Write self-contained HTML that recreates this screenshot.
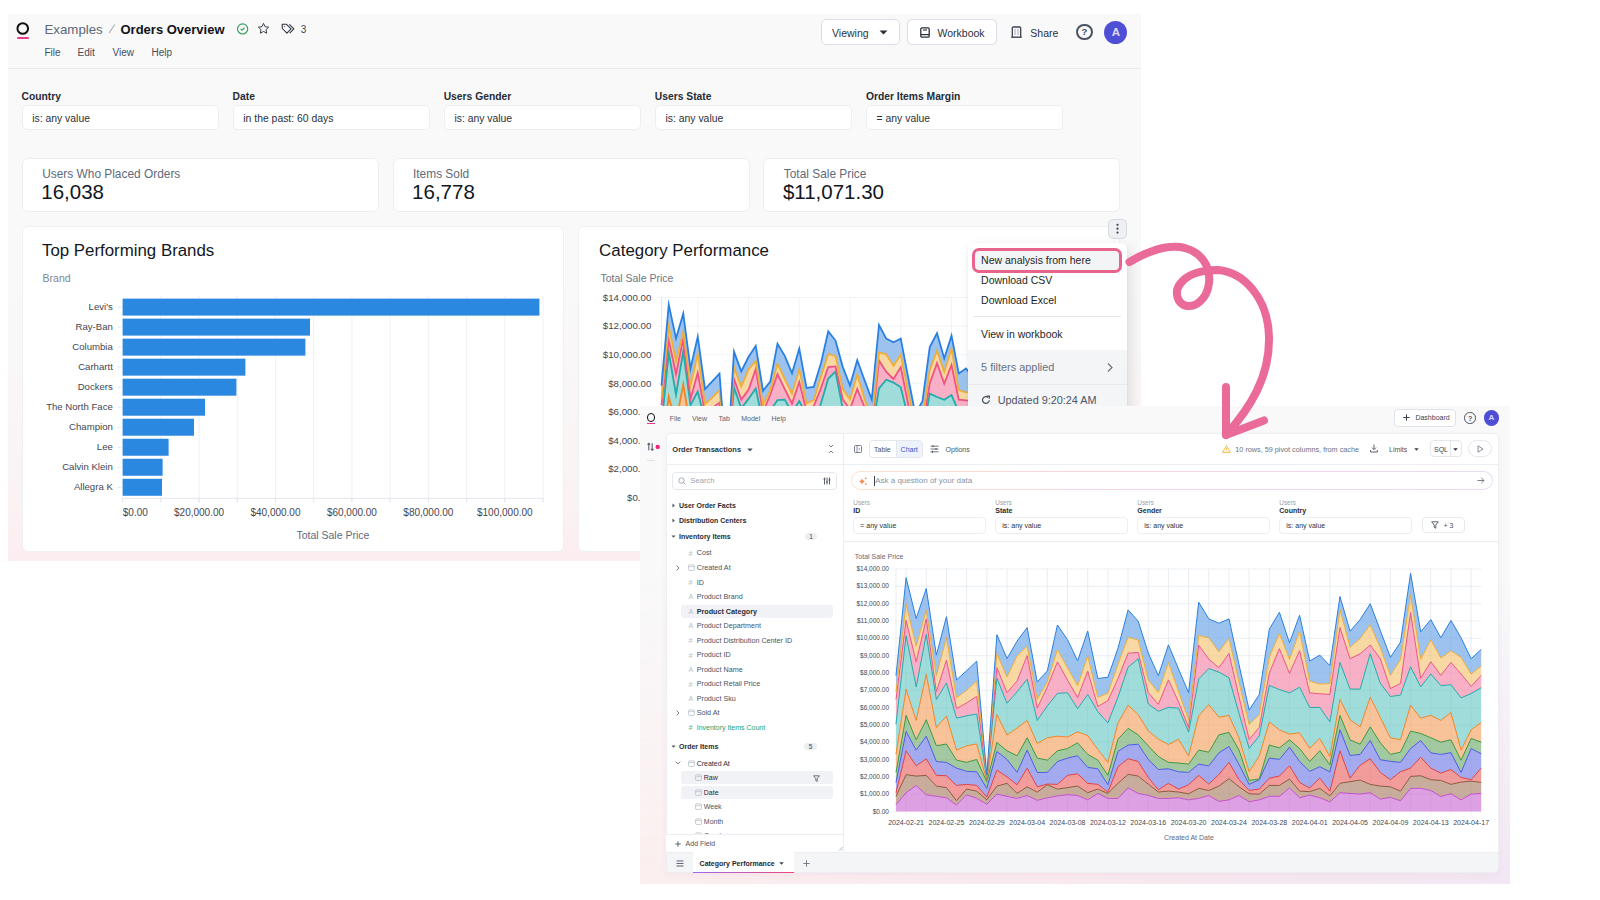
<!DOCTYPE html>
<html><head><meta charset="utf-8"><title>Orders Overview</title>
<style>
*{box-sizing:border-box;margin:0;padding:0}
html,body{width:1600px;height:900px;overflow:hidden;background:#fff;font-family:"Liberation Sans",sans-serif}
.t{position:absolute;white-space:nowrap;line-height:1}
.b{position:absolute}
svg{position:absolute}
</style></head><body>
<div class="b" style="left:8px;top:14px;width:1133px;height:547px;background:linear-gradient(180deg,#f9f9fa 0%,#f9f9fa 50%,#fbf3f3 88%,#fcedf0 100%)"></div>
<div class="b" style="left:8px;top:68px;width:1133px;height:1px;background:#e9ebee"></div>
<svg style="left:15px;top:21px" width="16" height="16" viewBox="0 0 16 16"><circle cx="7.75" cy="7.45" r="5.3" fill="none" stroke="#111" stroke-width="2"/></svg>
<div class="b" style="left:16.6px;top:37px;width:12.4px;height:1.8px;background:#f0398a;border-radius:1px"></div>
<div class="t" style="left:44.40px;top:22.94px;font-size:13.3px;color:#5d6878;font-weight:400;">Examples</div>
<svg style="left:107px;top:23px" width="10" height="12" viewBox="0 0 10 12"><path d="M2.3 9.6L7.6 1.8" stroke="#a9b0bb" stroke-width="1.1" stroke-linecap="round"/></svg>
<div class="t" style="left:120.50px;top:23.20px;font-size:13px;color:#111318;font-weight:700;">Orders Overview</div>
<svg style="left:236px;top:21.5px" width="13" height="13" viewBox="0 0 13 13"><circle cx="6.6" cy="6.9" r="5.1" fill="none" stroke="#2f9e5e" stroke-width="1.15"/><path d="M4.9 7.3 L6.1 8.2 L8.3 6" fill="none" stroke="#2f9e5e" stroke-width="1.1" stroke-linecap="round" stroke-linejoin="round"/></svg>
<svg style="left:256.5px;top:21.8px" width="13" height="13" viewBox="0 0 24 24"><path d="M12 2.5l2.9 6.2 6.6.8-4.9 4.6 1.3 6.6L12 17.4l-5.9 3.3 1.3-6.6-4.9-4.6 6.6-.8z" fill="none" stroke="#2b313b" stroke-width="1.7" stroke-linejoin="round"/></svg>
<svg style="left:280px;top:23px" width="16" height="12" viewBox="0 0 16 12"><path d="M2.2 1.3h4.3l4.6 4.6-4.2 4.2-4.6-4.6z" fill="none" stroke="#2b313b" stroke-width="1.05" stroke-linejoin="round"/><circle cx="4.3" cy="3.4" r="0.5" fill="#2b313b"/><path d="M9.3 1.3l4.6 4.6-4.2 4.2" fill="none" stroke="#2b313b" stroke-width="1.05" stroke-linejoin="round"/></svg>
<div class="t" style="left:300.80px;top:24.54px;font-size:10px;color:#3b4351;font-weight:400;">3</div>
<div class="t" style="left:44.40px;top:47.53px;font-size:10px;color:#454d5a;font-weight:400;">File</div>
<div class="t" style="left:77.60px;top:47.53px;font-size:10px;color:#454d5a;font-weight:400;">Edit</div>
<div class="t" style="left:112.60px;top:47.53px;font-size:10px;color:#454d5a;font-weight:400;">View</div>
<div class="t" style="left:151.50px;top:47.53px;font-size:10px;color:#454d5a;font-weight:400;">Help</div>
<div class="b" style="left:821.2px;top:18.7px;width:78.4px;height:26.3px;border:1px solid #d9dde5;border-radius:5px;background:#fff"></div>
<div class="t" style="left:832.00px;top:28.11px;font-size:10.5px;color:#2b313b;font-weight:400;">Viewing</div>
<svg style="left:878.5px;top:29.5px" width="9" height="5" viewBox="0 0 9 5"><path d="M0.5 0.5h8L4.5 4.5z" fill="#2b313b"/></svg>
<div class="b" style="left:906.9px;top:18.7px;width:89.7px;height:26.3px;border:1px solid #d9dde5;border-radius:5px;background:#fff"></div>
<svg style="left:919.5px;top:26.5px" width="10" height="11" viewBox="0 0 10 11"><rect x="0.8" y="0.8" width="8.4" height="9.4" rx="1.2" fill="none" stroke="#2b313b" stroke-width="1.3"/><path d="M0.8 7.6h8.4" stroke="#2b313b" stroke-width="1.2"/><path d="M3 3h4" stroke="#2b313b" stroke-width="1.1"/></svg>
<div class="t" style="left:937.50px;top:28.11px;font-size:10.5px;color:#2b313b;font-weight:400;">Workbook</div>
<svg style="left:1011px;top:26px" width="11" height="12" viewBox="0 0 11 12"><path d="M1.3 11V2.2Q1.3 1 2.5 1h6q1.2 0 1.2 1.2V11" fill="none" stroke="#3b4351" stroke-width="1.3"/><path d="M0.3 11.2h10.4" stroke="#3b4351" stroke-width="1.4"/><path d="M4 3v6M7 3v6" stroke="#9aa1ac" stroke-width="0.9"/></svg>
<div class="t" style="left:1030.30px;top:27.81px;font-size:10.5px;color:#2b313b;font-weight:400;">Share</div>
<div class="b" style="left:1076.3px;top:23.8px;width:16.4px;height:16.4px;border:2px solid #4a5262;border-radius:50%"></div>
<div class="t" style="left:884.50px;width:400px;text-align:center;top:27.46px;font-size:9.5px;color:#434b5c;font-weight:700;">?</div>
<div class="b" style="left:1104.4px;top:20.5px;width:23px;height:23px;border-radius:50%;background:#4f4fd6"></div>
<div class="t" style="left:915.90px;width:400px;text-align:center;top:26.57px;font-size:11.5px;color:#dedafa;font-weight:700;">A</div>
<div class="t" style="left:21.50px;top:92.08px;font-size:10.3px;color:#262c36;font-weight:700;">Country</div>
<div class="b" style="left:21.50px;top:104.6px;width:197px;height:25.6px;background:#fff;border:1px solid #eceef2;border-radius:5px"></div>
<div class="t" style="left:32.20px;top:113.50px;font-size:10.4px;color:#2b313b;font-weight:400;">is: any value</div>
<div class="t" style="left:232.60px;top:92.08px;font-size:10.3px;color:#262c36;font-weight:700;">Date</div>
<div class="b" style="left:232.60px;top:104.6px;width:197px;height:25.6px;background:#fff;border:1px solid #eceef2;border-radius:5px"></div>
<div class="t" style="left:243.30px;top:113.50px;font-size:10.4px;color:#2b313b;font-weight:400;">in the past: 60 days</div>
<div class="t" style="left:443.70px;top:92.08px;font-size:10.3px;color:#262c36;font-weight:700;">Users Gender</div>
<div class="b" style="left:443.70px;top:104.6px;width:197px;height:25.6px;background:#fff;border:1px solid #eceef2;border-radius:5px"></div>
<div class="t" style="left:454.40px;top:113.50px;font-size:10.4px;color:#2b313b;font-weight:400;">is: any value</div>
<div class="t" style="left:654.80px;top:92.08px;font-size:10.3px;color:#262c36;font-weight:700;">Users State</div>
<div class="b" style="left:654.80px;top:104.6px;width:197px;height:25.6px;background:#fff;border:1px solid #eceef2;border-radius:5px"></div>
<div class="t" style="left:665.50px;top:113.50px;font-size:10.4px;color:#2b313b;font-weight:400;">is: any value</div>
<div class="t" style="left:865.90px;top:92.08px;font-size:10.3px;color:#262c36;font-weight:700;">Order Items Margin</div>
<div class="b" style="left:865.90px;top:104.6px;width:197px;height:25.6px;background:#fff;border:1px solid #eceef2;border-radius:5px"></div>
<div class="t" style="left:876.60px;top:113.50px;font-size:10.4px;color:#2b313b;font-weight:400;">= any value</div>
<div class="b" style="left:21.70px;top:157.6px;width:357px;height:54.5px;background:#fff;border:1px solid #eceef2;border-radius:6px"></div>
<div class="t" style="left:42.20px;top:168.53px;font-size:11.9px;color:#5f6a7b;font-weight:400;">Users Who Placed Orders</div>
<div class="t" style="left:41.30px;top:182.45px;font-size:20.5px;color:#121722;font-weight:400;">16,038</div>
<div class="b" style="left:392.50px;top:157.6px;width:357px;height:54.5px;background:#fff;border:1px solid #eceef2;border-radius:6px"></div>
<div class="t" style="left:413.00px;top:168.53px;font-size:11.9px;color:#5f6a7b;font-weight:400;">Items Sold</div>
<div class="t" style="left:412.10px;top:182.45px;font-size:20.5px;color:#121722;font-weight:400;">16,778</div>
<div class="b" style="left:763.30px;top:157.6px;width:357px;height:54.5px;background:#fff;border:1px solid #eceef2;border-radius:6px"></div>
<div class="t" style="left:783.80px;top:168.53px;font-size:11.9px;color:#5f6a7b;font-weight:400;">Total Sale Price</div>
<div class="t" style="left:782.90px;top:182.45px;font-size:20.5px;color:#121722;font-weight:400;">$11,071.30</div>
<div class="b" style="left:21.5px;top:225.7px;width:542.2px;height:326.8px;background:#fff;border:1px solid #eef0f3;border-radius:6px"></div>
<div class="b" style="left:578.2px;top:225.7px;width:542px;height:326.8px;background:#fff;border:1px solid #eef0f3;border-radius:6px"></div>
<div class="t" style="left:42.00px;top:243.44px;font-size:16.85px;color:#121722;font-weight:400;">Top Performing Brands</div>
<div class="t" style="left:42.60px;top:273.11px;font-size:10.5px;color:#7b8594;font-weight:400;">Brand</div>
<div class="t" style="left:599.10px;top:243.39px;font-size:16.9px;color:#121722;font-weight:400;">Category Performance</div>
<div class="t" style="left:600.40px;top:272.91px;font-size:10.5px;color:#6b7585;font-weight:400;">Total Sale Price</div>
<svg style="left:0;top:0" width="1600" height="900" viewBox="0 0 1600 900"><line x1="160.82" y1="296" x2="160.82" y2="502" stroke="#eff1f4" stroke-width="1"/><line x1="199.04" y1="296" x2="199.04" y2="502" stroke="#eff1f4" stroke-width="1"/><line x1="237.26" y1="296" x2="237.26" y2="502" stroke="#eff1f4" stroke-width="1"/><line x1="275.48" y1="296" x2="275.48" y2="502" stroke="#eff1f4" stroke-width="1"/><line x1="313.70" y1="296" x2="313.70" y2="502" stroke="#eff1f4" stroke-width="1"/><line x1="351.92" y1="296" x2="351.92" y2="502" stroke="#eff1f4" stroke-width="1"/><line x1="390.14" y1="296" x2="390.14" y2="502" stroke="#eff1f4" stroke-width="1"/><line x1="428.36" y1="296" x2="428.36" y2="502" stroke="#eff1f4" stroke-width="1"/><line x1="466.58" y1="296" x2="466.58" y2="502" stroke="#eff1f4" stroke-width="1"/><line x1="504.80" y1="296" x2="504.80" y2="502" stroke="#eff1f4" stroke-width="1"/><line x1="543.02" y1="296" x2="543.02" y2="502" stroke="#eff1f4" stroke-width="1"/><line x1="122.6" y1="498.3" x2="543.1" y2="498.3" stroke="#e2e5ea" stroke-width="1"/><line x1="122.60" y1="498" x2="122.60" y2="502.5" stroke="#e2e5ea" stroke-width="1"/><line x1="160.82" y1="498" x2="160.82" y2="502.5" stroke="#e2e5ea" stroke-width="1"/><line x1="199.04" y1="498" x2="199.04" y2="502.5" stroke="#e2e5ea" stroke-width="1"/><line x1="237.26" y1="498" x2="237.26" y2="502.5" stroke="#e2e5ea" stroke-width="1"/><line x1="275.48" y1="498" x2="275.48" y2="502.5" stroke="#e2e5ea" stroke-width="1"/><line x1="313.70" y1="498" x2="313.70" y2="502.5" stroke="#e2e5ea" stroke-width="1"/><line x1="351.92" y1="498" x2="351.92" y2="502.5" stroke="#e2e5ea" stroke-width="1"/><line x1="390.14" y1="498" x2="390.14" y2="502.5" stroke="#e2e5ea" stroke-width="1"/><line x1="428.36" y1="498" x2="428.36" y2="502.5" stroke="#e2e5ea" stroke-width="1"/><line x1="466.58" y1="498" x2="466.58" y2="502.5" stroke="#e2e5ea" stroke-width="1"/><line x1="504.80" y1="498" x2="504.80" y2="502.5" stroke="#e2e5ea" stroke-width="1"/><line x1="543.02" y1="498" x2="543.02" y2="502.5" stroke="#e2e5ea" stroke-width="1"/><rect x="122.6" y="298.60" width="416.80" height="17" fill="#2a88e1"/><line x1="117.5" y1="307.10" x2="121.5" y2="307.10" stroke="#e2e5ea" stroke-width="1"/><rect x="122.6" y="318.62" width="187.40" height="17" fill="#2a88e1"/><line x1="117.5" y1="327.12" x2="121.5" y2="327.12" stroke="#e2e5ea" stroke-width="1"/><rect x="122.6" y="338.64" width="182.80" height="17" fill="#2a88e1"/><line x1="117.5" y1="347.14" x2="121.5" y2="347.14" stroke="#e2e5ea" stroke-width="1"/><rect x="122.6" y="358.66" width="122.80" height="17" fill="#2a88e1"/><line x1="117.5" y1="367.16" x2="121.5" y2="367.16" stroke="#e2e5ea" stroke-width="1"/><rect x="122.6" y="378.68" width="113.80" height="17" fill="#2a88e1"/><line x1="117.5" y1="387.18" x2="121.5" y2="387.18" stroke="#e2e5ea" stroke-width="1"/><rect x="122.6" y="398.70" width="82.40" height="17" fill="#2a88e1"/><line x1="117.5" y1="407.20" x2="121.5" y2="407.20" stroke="#e2e5ea" stroke-width="1"/><rect x="122.6" y="418.72" width="71.40" height="17" fill="#2a88e1"/><line x1="117.5" y1="427.22" x2="121.5" y2="427.22" stroke="#e2e5ea" stroke-width="1"/><rect x="122.6" y="438.74" width="46.00" height="17" fill="#2a88e1"/><line x1="117.5" y1="447.24" x2="121.5" y2="447.24" stroke="#e2e5ea" stroke-width="1"/><rect x="122.6" y="458.76" width="40.00" height="17" fill="#2a88e1"/><line x1="117.5" y1="467.26" x2="121.5" y2="467.26" stroke="#e2e5ea" stroke-width="1"/><rect x="122.6" y="478.78" width="39.40" height="17" fill="#2a88e1"/><line x1="117.5" y1="487.28" x2="121.5" y2="487.28" stroke="#e2e5ea" stroke-width="1"/></svg>
<div class="t" style="right:1487.20px;text-align:right;top:302.07px;font-size:9.6px;color:#3f4753;font-weight:400;">Levi's</div>
<div class="t" style="right:1487.20px;text-align:right;top:322.09px;font-size:9.6px;color:#3f4753;font-weight:400;">Ray-Ban</div>
<div class="t" style="right:1487.20px;text-align:right;top:342.11px;font-size:9.6px;color:#3f4753;font-weight:400;">Columbia</div>
<div class="t" style="right:1487.20px;text-align:right;top:362.13px;font-size:9.6px;color:#3f4753;font-weight:400;">Carhartt</div>
<div class="t" style="right:1487.20px;text-align:right;top:382.15px;font-size:9.6px;color:#3f4753;font-weight:400;">Dockers</div>
<div class="t" style="right:1487.20px;text-align:right;top:402.17px;font-size:9.6px;color:#3f4753;font-weight:400;">The North Face</div>
<div class="t" style="right:1487.20px;text-align:right;top:422.19px;font-size:9.6px;color:#3f4753;font-weight:400;">Champion</div>
<div class="t" style="right:1487.20px;text-align:right;top:442.21px;font-size:9.6px;color:#3f4753;font-weight:400;">Lee</div>
<div class="t" style="right:1487.20px;text-align:right;top:462.23px;font-size:9.6px;color:#3f4753;font-weight:400;">Calvin Klein</div>
<div class="t" style="right:1487.20px;text-align:right;top:482.25px;font-size:9.6px;color:#3f4753;font-weight:400;">Allegra K</div>
<div class="t" style="left:122.80px;top:507.54px;font-size:10px;color:#3f4753;font-weight:400;">$0.00</div>
<div class="t" style="left:-0.96px;width:400px;text-align:center;top:507.54px;font-size:10px;color:#3f4753;font-weight:400;">$20,000.00</div>
<div class="t" style="left:75.48px;width:400px;text-align:center;top:507.54px;font-size:10px;color:#3f4753;font-weight:400;">$40,000.00</div>
<div class="t" style="left:151.92px;width:400px;text-align:center;top:507.54px;font-size:10px;color:#3f4753;font-weight:400;">$60,000.00</div>
<div class="t" style="left:228.36px;width:400px;text-align:center;top:507.54px;font-size:10px;color:#3f4753;font-weight:400;">$80,000.00</div>
<div class="t" style="left:304.80px;width:400px;text-align:center;top:507.54px;font-size:10px;color:#3f4753;font-weight:400;">$100,000.00</div>
<div class="t" style="left:132.90px;width:400px;text-align:center;top:529.91px;font-size:10.5px;color:#5f6a7b;font-weight:400;">Total Sale Price</div>
<svg style="left:0;top:0" width="1600" height="900" viewBox="0 0 1600 900"><line x1="657" y1="497.70" x2="1084" y2="497.70" stroke="#f1f3f6" stroke-width="1"/><line x1="657" y1="469.10" x2="1084" y2="469.10" stroke="#f1f3f6" stroke-width="1"/><line x1="657" y1="440.50" x2="1084" y2="440.50" stroke="#f1f3f6" stroke-width="1"/><line x1="657" y1="411.90" x2="1084" y2="411.90" stroke="#f1f3f6" stroke-width="1"/><line x1="657" y1="383.30" x2="1084" y2="383.30" stroke="#f1f3f6" stroke-width="1"/><line x1="657" y1="354.70" x2="1084" y2="354.70" stroke="#f1f3f6" stroke-width="1"/><line x1="657" y1="326.10" x2="1084" y2="326.10" stroke="#f1f3f6" stroke-width="1"/><line x1="657" y1="297.50" x2="1084" y2="297.50" stroke="#f1f3f6" stroke-width="1"/><line x1="697.75" y1="297" x2="697.75" y2="498" stroke="#f1f3f6" stroke-width="1"/><line x1="748.50" y1="297" x2="748.50" y2="498" stroke="#f1f3f6" stroke-width="1"/><line x1="799.25" y1="297" x2="799.25" y2="498" stroke="#f1f3f6" stroke-width="1"/><line x1="850.00" y1="297" x2="850.00" y2="498" stroke="#f1f3f6" stroke-width="1"/><line x1="900.75" y1="297" x2="900.75" y2="498" stroke="#f1f3f6" stroke-width="1"/><line x1="951.50" y1="297" x2="951.50" y2="498" stroke="#f1f3f6" stroke-width="1"/><line x1="1002.25" y1="297" x2="1002.25" y2="498" stroke="#f1f3f6" stroke-width="1"/><line x1="1053.00" y1="297" x2="1053.00" y2="498" stroke="#f1f3f6" stroke-width="1"/><line x1="661.5" y1="297" x2="661.5" y2="498" stroke="#e6e9ee" stroke-width="1"/><polygon points="661.50,491.98 668.75,482.11 676.00,476.11 683.25,483.83 690.50,485.12 697.75,486.26 705.00,492.27 712.25,483.83 719.50,486.83 726.75,491.55 734.00,483.26 741.25,485.12 748.50,486.83 755.75,484.40 763.00,488.40 770.25,486.26 777.50,484.83 784.75,483.69 792.00,484.40 799.25,487.98 806.50,482.69 813.75,486.83 821.00,486.83 828.25,478.11 835.50,482.69 842.75,484.40 850.00,486.83 857.25,486.83 864.50,486.26 871.75,487.98 879.00,486.83 886.25,484.40 893.50,489.26 900.75,487.98 908.00,484.40 915.25,489.55 922.50,487.98 929.75,485.12 937.00,485.12 944.25,478.11 951.50,486.26 958.75,484.12 966.00,486.26 973.25,489.69 980.50,482.11 987.75,482.69 995.00,483.26 1002.25,482.11 1009.50,487.40 1016.75,485.97 1024.00,488.69 1031.25,478.54 1038.50,478.54 1045.75,480.25 1053.00,485.26 1060.25,482.97 1067.50,487.98 1074.75,483.26 1082.00,482.69 1082.00,497.70 1074.75,497.70 1067.50,497.70 1060.25,497.70 1053.00,497.70 1045.75,497.70 1038.50,497.70 1031.25,497.70 1024.00,497.70 1016.75,497.70 1009.50,497.70 1002.25,497.70 995.00,497.70 987.75,497.70 980.50,497.70 973.25,497.70 966.00,497.70 958.75,497.70 951.50,497.70 944.25,497.70 937.00,497.70 929.75,497.70 922.50,497.70 915.25,497.70 908.00,497.70 900.75,497.70 893.50,497.70 886.25,497.70 879.00,497.70 871.75,497.70 864.50,497.70 857.25,497.70 850.00,497.70 842.75,497.70 835.50,497.70 828.25,497.70 821.00,497.70 813.75,497.70 806.50,497.70 799.25,497.70 792.00,497.70 784.75,497.70 777.50,497.70 770.25,497.70 763.00,497.70 755.75,497.70 748.50,497.70 741.25,497.70 734.00,497.70 726.75,497.70 719.50,497.70 712.25,497.70 705.00,497.70 697.75,497.70 690.50,497.70 683.25,497.70 676.00,497.70 668.75,497.70 661.50,497.70" fill="#dda0e2"/>
<polygon points="661.50,485.12 668.75,467.24 676.00,468.38 683.25,467.81 690.50,476.68 697.75,477.97 705.00,488.69 712.25,479.11 719.50,480.83 726.75,487.98 734.00,476.68 741.25,474.39 748.50,482.69 755.75,477.25 763.00,481.68 770.25,475.53 777.50,479.11 784.75,477.97 792.00,476.68 799.25,482.11 806.50,479.11 813.75,482.69 821.00,474.39 828.25,466.95 835.50,468.38 842.75,474.96 850.00,481.54 857.25,480.83 864.50,481.54 871.75,482.97 879.00,478.54 886.25,480.25 893.50,476.68 900.75,470.53 908.00,477.25 915.25,482.97 922.50,483.26 929.75,476.11 937.00,476.11 944.25,470.82 951.50,480.83 958.75,481.25 966.00,478.54 973.25,484.69 980.50,474.39 987.75,472.96 995.00,471.67 1002.25,475.25 1009.50,476.68 1016.75,477.25 1024.00,480.83 1031.25,468.67 1038.50,468.10 1045.75,471.39 1053.00,471.96 1060.25,475.25 1067.50,473.39 1074.75,472.53 1082.00,473.68 1082.00,482.69 1074.75,483.26 1067.50,487.98 1060.25,482.97 1053.00,485.26 1045.75,480.25 1038.50,478.54 1031.25,478.54 1024.00,488.69 1016.75,485.97 1009.50,487.40 1002.25,482.11 995.00,483.26 987.75,482.69 980.50,482.11 973.25,489.69 966.00,486.26 958.75,484.12 951.50,486.26 944.25,478.11 937.00,485.12 929.75,485.12 922.50,487.98 915.25,489.55 908.00,484.40 900.75,487.98 893.50,489.26 886.25,484.40 879.00,486.83 871.75,487.98 864.50,486.26 857.25,486.83 850.00,486.83 842.75,484.40 835.50,482.69 828.25,478.11 821.00,486.83 813.75,486.83 806.50,482.69 799.25,487.98 792.00,484.40 784.75,483.69 777.50,484.83 770.25,486.26 763.00,488.40 755.75,484.40 748.50,486.83 741.25,485.12 734.00,483.26 726.75,491.55 719.50,486.83 712.25,483.83 705.00,492.27 697.75,486.26 690.50,485.12 683.25,483.83 676.00,476.11 668.75,482.11 661.50,491.98" fill="#c9ad9c"/>
<polygon points="661.50,482.11 668.75,447.51 676.00,459.95 683.25,454.23 690.50,467.81 697.75,468.10 705.00,476.11 712.25,475.25 719.50,476.11 726.75,485.69 734.00,463.52 741.25,468.96 748.50,475.53 755.75,461.81 763.00,477.25 770.25,474.96 777.50,475.25 784.75,467.81 792.00,466.53 799.25,474.39 806.50,475.25 813.75,481.54 821.00,460.66 828.25,454.08 835.50,456.37 842.75,469.53 850.00,479.68 857.25,474.39 864.50,479.11 871.75,475.53 879.00,467.81 886.25,474.96 893.50,467.10 900.75,457.09 908.00,471.39 915.25,480.25 922.50,479.11 929.75,470.10 937.00,468.38 944.25,459.95 951.50,473.68 958.75,478.25 966.00,470.10 973.25,480.83 980.50,447.51 987.75,470.10 995.00,459.38 1002.25,454.08 1009.50,465.38 1016.75,471.39 1024.00,464.81 1031.25,461.81 1038.50,452.80 1045.75,461.81 1053.00,465.95 1060.25,462.95 1067.50,469.53 1074.75,471.39 1082.00,461.81 1082.00,473.68 1074.75,472.53 1067.50,473.39 1060.25,475.25 1053.00,471.96 1045.75,471.39 1038.50,468.10 1031.25,468.67 1024.00,480.83 1016.75,477.25 1009.50,476.68 1002.25,475.25 995.00,471.67 987.75,472.96 980.50,474.39 973.25,484.69 966.00,478.54 958.75,481.25 951.50,480.83 944.25,470.82 937.00,476.11 929.75,476.11 922.50,483.26 915.25,482.97 908.00,477.25 900.75,470.53 893.50,476.68 886.25,480.25 879.00,478.54 871.75,482.97 864.50,481.54 857.25,480.83 850.00,481.54 842.75,474.96 835.50,468.38 828.25,466.95 821.00,474.39 813.75,482.69 806.50,479.11 799.25,482.11 792.00,476.68 784.75,477.97 777.50,479.11 770.25,475.53 763.00,481.68 755.75,477.25 748.50,482.69 741.25,474.39 734.00,476.68 726.75,487.98 719.50,480.83 712.25,479.11 705.00,488.69 697.75,477.97 690.50,476.68 683.25,467.81 676.00,468.38 668.75,467.24 661.50,485.12" fill="#f29c9c"/>
<polygon points="661.50,473.68 668.75,431.63 676.00,446.94 683.25,435.50 690.50,456.37 697.75,457.09 705.00,461.81 712.25,464.52 719.50,464.81 726.75,478.54 734.00,448.08 741.25,454.66 748.50,465.38 755.75,446.94 763.00,465.38 770.25,465.38 777.50,456.37 784.75,453.51 792.00,451.65 799.25,461.24 806.50,462.38 813.75,475.53 821.00,448.08 828.25,442.79 835.50,442.07 842.75,454.66 850.00,462.95 857.25,462.38 864.50,464.81 871.75,465.38 879.00,458.52 886.25,459.95 893.50,449.22 900.75,443.93 908.00,458.80 915.25,475.25 922.50,471.39 929.75,453.51 937.00,454.66 944.25,444.50 951.50,456.37 958.75,464.52 966.00,460.66 973.25,464.95 980.50,430.20 987.75,451.37 995.00,450.51 1002.25,439.07 1009.50,454.94 1016.75,456.23 1024.00,457.09 1031.25,445.65 1038.50,439.07 1045.75,449.22 1053.00,450.51 1060.25,449.08 1067.50,465.38 1074.75,445.65 1082.00,449.94 1082.00,461.81 1074.75,471.39 1067.50,469.53 1060.25,462.95 1053.00,465.95 1045.75,461.81 1038.50,452.80 1031.25,461.81 1024.00,464.81 1016.75,471.39 1009.50,465.38 1002.25,454.08 995.00,459.38 987.75,470.10 980.50,447.51 973.25,480.83 966.00,470.10 958.75,478.25 951.50,473.68 944.25,459.95 937.00,468.38 929.75,470.10 922.50,479.11 915.25,480.25 908.00,471.39 900.75,457.09 893.50,467.10 886.25,474.96 879.00,467.81 871.75,475.53 864.50,479.11 857.25,474.39 850.00,479.68 842.75,469.53 835.50,456.37 828.25,454.08 821.00,460.66 813.75,481.54 806.50,475.25 799.25,474.39 792.00,466.53 784.75,467.81 777.50,475.25 770.25,474.96 763.00,477.25 755.75,461.81 748.50,475.53 741.25,468.96 734.00,463.52 726.75,485.69 719.50,476.11 712.25,475.25 705.00,476.11 697.75,468.10 690.50,467.81 683.25,454.23 676.00,459.95 668.75,447.51 661.50,482.11" fill="#a4aaef"/>
<polygon points="661.50,465.38 668.75,418.33 676.00,438.50 683.25,421.91 690.50,443.36 697.75,441.93 705.00,455.23 712.25,457.09 719.50,454.66 726.75,473.10 734.00,440.64 741.25,447.51 748.50,451.65 755.75,436.78 763.00,453.51 770.25,455.23 777.50,447.51 784.75,445.65 792.00,440.93 799.25,450.51 806.50,455.23 813.75,467.81 821.00,437.93 828.25,429.06 835.50,434.35 842.75,443.36 850.00,452.23 857.25,457.09 864.50,457.66 871.75,458.52 879.00,446.94 886.25,448.65 893.50,434.35 900.75,432.35 908.00,446.94 915.25,471.96 922.50,470.82 929.75,442.79 937.00,445.08 944.25,438.50 951.50,445.65 958.75,456.37 966.00,447.51 973.25,459.09 980.50,418.33 987.75,438.50 995.00,442.07 1002.25,427.77 1009.50,440.93 1016.75,450.51 1024.00,448.65 1031.25,431.35 1038.50,433.21 1045.75,436.78 1053.00,440.36 1060.25,438.50 1067.50,455.23 1074.75,437.35 1082.00,440.36 1082.00,449.94 1074.75,445.65 1067.50,465.38 1060.25,449.08 1053.00,450.51 1045.75,449.22 1038.50,439.07 1031.25,445.65 1024.00,457.09 1016.75,456.23 1009.50,454.94 1002.25,439.07 995.00,450.51 987.75,451.37 980.50,430.20 973.25,464.95 966.00,460.66 958.75,464.52 951.50,456.37 944.25,444.50 937.00,454.66 929.75,453.51 922.50,471.39 915.25,475.25 908.00,458.80 900.75,443.93 893.50,449.22 886.25,459.95 879.00,458.52 871.75,465.38 864.50,464.81 857.25,462.38 850.00,462.95 842.75,454.66 835.50,442.07 828.25,442.79 821.00,448.08 813.75,475.53 806.50,462.38 799.25,461.24 792.00,451.65 784.75,453.51 777.50,456.37 770.25,465.38 763.00,465.38 755.75,446.94 748.50,465.38 741.25,454.66 734.00,448.08 726.75,478.54 719.50,464.81 712.25,464.52 705.00,461.81 697.75,457.09 690.50,456.37 683.25,435.50 676.00,446.94 668.75,431.63 661.50,473.68" fill="#a3c9a1"/>
<polygon points="661.50,450.51 668.75,396.74 676.00,422.48 683.25,384.44 690.50,428.34 697.75,418.91 705.00,446.94 712.25,443.36 719.50,441.93 726.75,471.96 734.00,417.62 741.25,434.49 748.50,428.77 755.75,422.48 763.00,441.50 770.25,436.78 777.50,435.50 784.75,436.21 792.00,431.92 799.25,434.92 806.50,446.36 813.75,457.09 821.00,424.48 828.25,409.90 835.50,417.62 842.75,431.06 850.00,437.93 857.25,442.36 864.50,437.93 871.75,451.80 879.00,418.62 886.25,409.47 893.50,419.76 900.75,418.33 908.00,436.92 915.25,464.81 922.50,451.80 929.75,423.77 937.00,430.20 944.25,433.78 951.50,432.63 958.75,445.50 966.00,437.35 973.25,452.23 980.50,405.18 987.75,421.91 995.00,427.77 1002.25,403.32 1009.50,420.05 1016.75,436.78 1024.00,438.35 1031.25,409.90 1038.50,420.62 1045.75,418.33 1053.00,422.48 1060.25,415.90 1067.50,446.94 1074.75,430.20 1082.00,424.20 1082.00,440.36 1074.75,437.35 1067.50,455.23 1060.25,438.50 1053.00,440.36 1045.75,436.78 1038.50,433.21 1031.25,431.35 1024.00,448.65 1016.75,450.51 1009.50,440.93 1002.25,427.77 995.00,442.07 987.75,438.50 980.50,418.33 973.25,459.09 966.00,447.51 958.75,456.37 951.50,445.65 944.25,438.50 937.00,445.08 929.75,442.79 922.50,470.82 915.25,471.96 908.00,446.94 900.75,432.35 893.50,434.35 886.25,448.65 879.00,446.94 871.75,458.52 864.50,457.66 857.25,457.09 850.00,452.23 842.75,443.36 835.50,434.35 828.25,429.06 821.00,437.93 813.75,467.81 806.50,455.23 799.25,450.51 792.00,440.93 784.75,445.65 777.50,447.51 770.25,455.23 763.00,453.51 755.75,436.78 748.50,451.65 741.25,447.51 734.00,440.64 726.75,473.10 719.50,454.66 712.25,457.09 705.00,455.23 697.75,441.93 690.50,443.36 683.25,421.91 676.00,438.50 668.75,418.33 661.50,465.38" fill="#f9c39a"/>
<polygon points="661.50,425.49 668.75,352.55 676.00,394.74 683.25,351.55 690.50,405.18 697.75,391.59 705.00,420.62 712.25,418.62 719.50,417.19 726.75,470.53 734.00,387.59 741.25,408.32 748.50,398.89 755.75,388.45 763.00,422.48 770.25,410.47 777.50,400.17 784.75,399.60 792.00,412.76 799.25,401.03 806.50,415.19 813.75,424.48 821.00,403.32 828.25,378.58 835.50,371.57 842.75,408.90 850.00,414.90 857.25,411.76 864.50,412.33 871.75,432.06 879.00,388.30 886.25,379.72 893.50,382.58 900.75,387.30 908.00,416.90 915.25,445.50 922.50,435.35 929.75,393.60 937.00,397.03 944.25,399.75 951.50,395.03 958.75,411.76 966.00,411.76 973.25,423.63 980.50,374.58 987.75,396.60 995.00,396.60 1002.25,367.43 1009.50,391.88 1016.75,402.75 1024.00,401.60 1031.25,378.15 1038.50,394.74 1045.75,384.16 1053.00,393.74 1060.25,393.02 1067.50,403.89 1074.75,400.32 1082.00,395.45 1082.00,424.20 1074.75,430.20 1067.50,446.94 1060.25,415.90 1053.00,422.48 1045.75,418.33 1038.50,420.62 1031.25,409.90 1024.00,438.35 1016.75,436.78 1009.50,420.05 1002.25,403.32 995.00,427.77 987.75,421.91 980.50,405.18 973.25,452.23 966.00,437.35 958.75,445.50 951.50,432.63 944.25,433.78 937.00,430.20 929.75,423.77 922.50,451.80 915.25,464.81 908.00,436.92 900.75,418.33 893.50,419.76 886.25,409.47 879.00,418.62 871.75,451.80 864.50,437.93 857.25,442.36 850.00,437.93 842.75,431.06 835.50,417.62 828.25,409.90 821.00,424.48 813.75,457.09 806.50,446.36 799.25,434.92 792.00,431.92 784.75,436.21 777.50,435.50 770.25,436.78 763.00,441.50 755.75,422.48 748.50,428.77 741.25,434.49 734.00,417.62 726.75,471.96 719.50,441.93 712.25,443.36 705.00,446.94 697.75,418.91 690.50,428.34 683.25,384.44 676.00,422.48 668.75,396.74 661.50,450.51" fill="#9fdcda"/>
<polygon points="661.50,405.18 668.75,339.97 676.00,374.00 683.25,338.68 690.50,398.89 697.75,372.72 705.00,412.62 712.25,408.04 719.50,402.60 726.75,469.81 734.00,378.87 741.25,399.60 748.50,389.88 755.75,369.00 763.00,412.33 770.25,394.74 777.50,374.15 784.75,389.16 792.00,403.61 799.25,381.87 806.50,410.90 813.75,406.18 821.00,388.02 828.25,367.00 835.50,366.43 842.75,399.46 850.00,409.18 857.25,389.02 864.50,407.18 871.75,428.20 879.00,360.42 886.25,371.86 893.50,379.01 900.75,367.14 908.00,403.03 915.25,438.07 922.50,428.20 929.75,383.30 937.00,363.28 944.25,383.59 951.50,365.00 958.75,399.75 966.00,400.46 973.25,401.03 980.50,345.83 987.75,371.57 995.00,367.43 1002.25,360.28 1009.50,371.57 1016.75,396.17 1024.00,391.88 1031.25,333.39 1038.50,387.73 1045.75,374.00 1053.00,385.30 1060.25,374.58 1067.50,384.16 1074.75,394.31 1082.00,385.30 1082.00,395.45 1074.75,400.32 1067.50,403.89 1060.25,393.02 1053.00,393.74 1045.75,384.16 1038.50,394.74 1031.25,378.15 1024.00,401.60 1016.75,402.75 1009.50,391.88 1002.25,367.43 995.00,396.60 987.75,396.60 980.50,374.58 973.25,423.63 966.00,411.76 958.75,411.76 951.50,395.03 944.25,399.75 937.00,397.03 929.75,393.60 922.50,435.35 915.25,445.50 908.00,416.90 900.75,387.30 893.50,382.58 886.25,379.72 879.00,388.30 871.75,432.06 864.50,412.33 857.25,411.76 850.00,414.90 842.75,408.90 835.50,371.57 828.25,378.58 821.00,403.32 813.75,424.48 806.50,415.19 799.25,401.03 792.00,412.76 784.75,399.60 777.50,400.17 770.25,410.47 763.00,422.48 755.75,388.45 748.50,398.89 741.25,408.32 734.00,387.59 726.75,470.53 719.50,417.19 712.25,418.62 705.00,420.62 697.75,391.59 690.50,405.18 683.25,351.55 676.00,394.74 668.75,352.55 661.50,425.49" fill="#f8b0c7"/>
<polygon points="661.50,398.89 668.75,326.53 676.00,361.13 683.25,331.82 690.50,385.73 697.75,354.13 705.00,403.89 712.25,397.60 719.50,390.02 726.75,469.10 734.00,367.43 741.25,386.59 748.50,369.29 755.75,360.99 763.00,405.18 770.25,390.45 777.50,363.85 784.75,379.01 792.00,393.88 799.25,369.29 806.50,403.32 813.75,400.03 821.00,376.15 828.25,353.84 835.50,356.13 842.75,389.02 850.00,399.46 857.25,374.72 864.50,398.60 871.75,422.05 879.00,352.41 886.25,354.27 893.50,365.85 900.75,354.70 908.00,391.31 915.25,425.77 922.50,417.76 929.75,370.14 937.00,350.70 944.25,372.15 951.50,348.84 958.75,390.16 966.00,392.45 973.25,392.02 980.50,330.96 987.75,361.99 995.00,354.84 1002.25,343.55 1009.50,362.56 1016.75,385.30 1024.00,372.15 1031.25,318.95 1038.50,372.15 1045.75,355.99 1053.00,371.00 1060.25,365.00 1067.50,370.43 1074.75,384.16 1082.00,377.58 1082.00,385.30 1074.75,394.31 1067.50,384.16 1060.25,374.58 1053.00,385.30 1045.75,374.00 1038.50,387.73 1031.25,333.39 1024.00,391.88 1016.75,396.17 1009.50,371.57 1002.25,360.28 995.00,367.43 987.75,371.57 980.50,345.83 973.25,401.03 966.00,400.46 958.75,399.75 951.50,365.00 944.25,383.59 937.00,363.28 929.75,383.30 922.50,428.20 915.25,438.07 908.00,403.03 900.75,367.14 893.50,379.01 886.25,371.86 879.00,360.42 871.75,428.20 864.50,407.18 857.25,389.02 850.00,409.18 842.75,399.46 835.50,366.43 828.25,367.00 821.00,388.02 813.75,406.18 806.50,410.90 799.25,381.87 792.00,403.61 784.75,389.16 777.50,374.15 770.25,394.74 763.00,412.33 755.75,369.00 748.50,389.88 741.25,399.60 734.00,378.87 726.75,469.81 719.50,402.60 712.25,408.04 705.00,412.62 697.75,372.72 690.50,398.89 683.25,338.68 676.00,374.00 668.75,339.97 661.50,405.18" fill="#f8d9a3"/>
<polygon points="661.50,385.59 668.75,304.65 676.00,338.40 683.25,313.66 690.50,368.57 697.75,336.82 705.00,389.02 712.25,381.44 719.50,373.58 726.75,467.67 734.00,351.70 741.25,371.43 748.50,356.99 755.75,345.83 763.00,390.74 770.25,381.58 777.50,343.69 784.75,355.84 792.00,373.29 799.25,348.69 806.50,387.88 813.75,386.88 821.00,362.99 828.25,331.25 835.50,340.54 842.75,366.86 850.00,385.59 857.25,360.13 864.50,380.01 871.75,399.60 879.00,324.96 886.25,338.68 893.50,342.26 900.75,338.68 908.00,376.58 915.25,413.90 922.50,401.17 929.75,347.12 937.00,333.25 944.25,358.42 951.50,335.68 958.75,373.43 966.00,368.57 973.25,377.29 980.50,320.24 987.75,348.84 995.00,339.26 1002.25,326.24 1009.50,348.26 1016.75,370.43 1024.00,357.85 1031.25,301.07 1038.50,349.41 1045.75,339.26 1053.00,354.27 1060.25,339.97 1067.50,354.27 1074.75,371.57 1082.00,363.85 1082.00,377.58 1074.75,384.16 1067.50,370.43 1060.25,365.00 1053.00,371.00 1045.75,355.99 1038.50,372.15 1031.25,318.95 1024.00,372.15 1016.75,385.30 1009.50,362.56 1002.25,343.55 995.00,354.84 987.75,361.99 980.50,330.96 973.25,392.02 966.00,392.45 958.75,390.16 951.50,348.84 944.25,372.15 937.00,350.70 929.75,370.14 922.50,417.76 915.25,425.77 908.00,391.31 900.75,354.70 893.50,365.85 886.25,354.27 879.00,352.41 871.75,422.05 864.50,398.60 857.25,374.72 850.00,399.46 842.75,389.02 835.50,356.13 828.25,353.84 821.00,376.15 813.75,400.03 806.50,403.32 799.25,369.29 792.00,393.88 784.75,379.01 777.50,363.85 770.25,390.45 763.00,405.18 755.75,360.99 748.50,369.29 741.25,386.59 734.00,367.43 726.75,469.10 719.50,390.02 712.25,397.60 705.00,403.89 697.75,354.13 690.50,385.73 683.25,331.82 676.00,361.13 668.75,326.53 661.50,398.89" fill="#9cc3ef"/>
<polyline points="661.50,491.98 668.75,482.11 676.00,476.11 683.25,483.83 690.50,485.12 697.75,486.26 705.00,492.27 712.25,483.83 719.50,486.83 726.75,491.55 734.00,483.26 741.25,485.12 748.50,486.83 755.75,484.40 763.00,488.40 770.25,486.26 777.50,484.83 784.75,483.69 792.00,484.40 799.25,487.98 806.50,482.69 813.75,486.83 821.00,486.83 828.25,478.11 835.50,482.69 842.75,484.40 850.00,486.83 857.25,486.83 864.50,486.26 871.75,487.98 879.00,486.83 886.25,484.40 893.50,489.26 900.75,487.98 908.00,484.40 915.25,489.55 922.50,487.98 929.75,485.12 937.00,485.12 944.25,478.11 951.50,486.26 958.75,484.12 966.00,486.26 973.25,489.69 980.50,482.11 987.75,482.69 995.00,483.26 1002.25,482.11 1009.50,487.40 1016.75,485.97 1024.00,488.69 1031.25,478.54 1038.50,478.54 1045.75,480.25 1053.00,485.26 1060.25,482.97 1067.50,487.98 1074.75,483.26 1082.00,482.69" fill="none" stroke="#c64fd0" stroke-width="1.8" stroke-linejoin="miter" stroke-miterlimit="12"/>
<polyline points="661.50,485.12 668.75,467.24 676.00,468.38 683.25,467.81 690.50,476.68 697.75,477.97 705.00,488.69 712.25,479.11 719.50,480.83 726.75,487.98 734.00,476.68 741.25,474.39 748.50,482.69 755.75,477.25 763.00,481.68 770.25,475.53 777.50,479.11 784.75,477.97 792.00,476.68 799.25,482.11 806.50,479.11 813.75,482.69 821.00,474.39 828.25,466.95 835.50,468.38 842.75,474.96 850.00,481.54 857.25,480.83 864.50,481.54 871.75,482.97 879.00,478.54 886.25,480.25 893.50,476.68 900.75,470.53 908.00,477.25 915.25,482.97 922.50,483.26 929.75,476.11 937.00,476.11 944.25,470.82 951.50,480.83 958.75,481.25 966.00,478.54 973.25,484.69 980.50,474.39 987.75,472.96 995.00,471.67 1002.25,475.25 1009.50,476.68 1016.75,477.25 1024.00,480.83 1031.25,468.67 1038.50,468.10 1045.75,471.39 1053.00,471.96 1060.25,475.25 1067.50,473.39 1074.75,472.53 1082.00,473.68" fill="none" stroke="#8c5a3c" stroke-width="1.8" stroke-linejoin="miter" stroke-miterlimit="12"/>
<polyline points="661.50,482.11 668.75,447.51 676.00,459.95 683.25,454.23 690.50,467.81 697.75,468.10 705.00,476.11 712.25,475.25 719.50,476.11 726.75,485.69 734.00,463.52 741.25,468.96 748.50,475.53 755.75,461.81 763.00,477.25 770.25,474.96 777.50,475.25 784.75,467.81 792.00,466.53 799.25,474.39 806.50,475.25 813.75,481.54 821.00,460.66 828.25,454.08 835.50,456.37 842.75,469.53 850.00,479.68 857.25,474.39 864.50,479.11 871.75,475.53 879.00,467.81 886.25,474.96 893.50,467.10 900.75,457.09 908.00,471.39 915.25,480.25 922.50,479.11 929.75,470.10 937.00,468.38 944.25,459.95 951.50,473.68 958.75,478.25 966.00,470.10 973.25,480.83 980.50,447.51 987.75,470.10 995.00,459.38 1002.25,454.08 1009.50,465.38 1016.75,471.39 1024.00,464.81 1031.25,461.81 1038.50,452.80 1045.75,461.81 1053.00,465.95 1060.25,462.95 1067.50,469.53 1074.75,471.39 1082.00,461.81" fill="none" stroke="#e5403e" stroke-width="1.8" stroke-linejoin="miter" stroke-miterlimit="12"/>
<polyline points="661.50,473.68 668.75,431.63 676.00,446.94 683.25,435.50 690.50,456.37 697.75,457.09 705.00,461.81 712.25,464.52 719.50,464.81 726.75,478.54 734.00,448.08 741.25,454.66 748.50,465.38 755.75,446.94 763.00,465.38 770.25,465.38 777.50,456.37 784.75,453.51 792.00,451.65 799.25,461.24 806.50,462.38 813.75,475.53 821.00,448.08 828.25,442.79 835.50,442.07 842.75,454.66 850.00,462.95 857.25,462.38 864.50,464.81 871.75,465.38 879.00,458.52 886.25,459.95 893.50,449.22 900.75,443.93 908.00,458.80 915.25,475.25 922.50,471.39 929.75,453.51 937.00,454.66 944.25,444.50 951.50,456.37 958.75,464.52 966.00,460.66 973.25,464.95 980.50,430.20 987.75,451.37 995.00,450.51 1002.25,439.07 1009.50,454.94 1016.75,456.23 1024.00,457.09 1031.25,445.65 1038.50,439.07 1045.75,449.22 1053.00,450.51 1060.25,449.08 1067.50,465.38 1074.75,445.65 1082.00,449.94" fill="none" stroke="#4c5ae6" stroke-width="1.8" stroke-linejoin="miter" stroke-miterlimit="12"/>
<polyline points="661.50,465.38 668.75,418.33 676.00,438.50 683.25,421.91 690.50,443.36 697.75,441.93 705.00,455.23 712.25,457.09 719.50,454.66 726.75,473.10 734.00,440.64 741.25,447.51 748.50,451.65 755.75,436.78 763.00,453.51 770.25,455.23 777.50,447.51 784.75,445.65 792.00,440.93 799.25,450.51 806.50,455.23 813.75,467.81 821.00,437.93 828.25,429.06 835.50,434.35 842.75,443.36 850.00,452.23 857.25,457.09 864.50,457.66 871.75,458.52 879.00,446.94 886.25,448.65 893.50,434.35 900.75,432.35 908.00,446.94 915.25,471.96 922.50,470.82 929.75,442.79 937.00,445.08 944.25,438.50 951.50,445.65 958.75,456.37 966.00,447.51 973.25,459.09 980.50,418.33 987.75,438.50 995.00,442.07 1002.25,427.77 1009.50,440.93 1016.75,450.51 1024.00,448.65 1031.25,431.35 1038.50,433.21 1045.75,436.78 1053.00,440.36 1060.25,438.50 1067.50,455.23 1074.75,437.35 1082.00,440.36" fill="none" stroke="#3b983c" stroke-width="1.8" stroke-linejoin="miter" stroke-miterlimit="12"/>
<polyline points="661.50,450.51 668.75,396.74 676.00,422.48 683.25,384.44 690.50,428.34 697.75,418.91 705.00,446.94 712.25,443.36 719.50,441.93 726.75,471.96 734.00,417.62 741.25,434.49 748.50,428.77 755.75,422.48 763.00,441.50 770.25,436.78 777.50,435.50 784.75,436.21 792.00,431.92 799.25,434.92 806.50,446.36 813.75,457.09 821.00,424.48 828.25,409.90 835.50,417.62 842.75,431.06 850.00,437.93 857.25,442.36 864.50,437.93 871.75,451.80 879.00,418.62 886.25,409.47 893.50,419.76 900.75,418.33 908.00,436.92 915.25,464.81 922.50,451.80 929.75,423.77 937.00,430.20 944.25,433.78 951.50,432.63 958.75,445.50 966.00,437.35 973.25,452.23 980.50,405.18 987.75,421.91 995.00,427.77 1002.25,403.32 1009.50,420.05 1016.75,436.78 1024.00,438.35 1031.25,409.90 1038.50,420.62 1045.75,418.33 1053.00,422.48 1060.25,415.90 1067.50,446.94 1074.75,430.20 1082.00,424.20" fill="none" stroke="#f08624" stroke-width="1.8" stroke-linejoin="miter" stroke-miterlimit="12"/>
<polyline points="661.50,425.49 668.75,352.55 676.00,394.74 683.25,351.55 690.50,405.18 697.75,391.59 705.00,420.62 712.25,418.62 719.50,417.19 726.75,470.53 734.00,387.59 741.25,408.32 748.50,398.89 755.75,388.45 763.00,422.48 770.25,410.47 777.50,400.17 784.75,399.60 792.00,412.76 799.25,401.03 806.50,415.19 813.75,424.48 821.00,403.32 828.25,378.58 835.50,371.57 842.75,408.90 850.00,414.90 857.25,411.76 864.50,412.33 871.75,432.06 879.00,388.30 886.25,379.72 893.50,382.58 900.75,387.30 908.00,416.90 915.25,445.50 922.50,435.35 929.75,393.60 937.00,397.03 944.25,399.75 951.50,395.03 958.75,411.76 966.00,411.76 973.25,423.63 980.50,374.58 987.75,396.60 995.00,396.60 1002.25,367.43 1009.50,391.88 1016.75,402.75 1024.00,401.60 1031.25,378.15 1038.50,394.74 1045.75,384.16 1053.00,393.74 1060.25,393.02 1067.50,403.89 1074.75,400.32 1082.00,395.45" fill="none" stroke="#1eadab" stroke-width="1.8" stroke-linejoin="miter" stroke-miterlimit="12"/>
<polyline points="661.50,405.18 668.75,339.97 676.00,374.00 683.25,338.68 690.50,398.89 697.75,372.72 705.00,412.62 712.25,408.04 719.50,402.60 726.75,469.81 734.00,378.87 741.25,399.60 748.50,389.88 755.75,369.00 763.00,412.33 770.25,394.74 777.50,374.15 784.75,389.16 792.00,403.61 799.25,381.87 806.50,410.90 813.75,406.18 821.00,388.02 828.25,367.00 835.50,366.43 842.75,399.46 850.00,409.18 857.25,389.02 864.50,407.18 871.75,428.20 879.00,360.42 886.25,371.86 893.50,379.01 900.75,367.14 908.00,403.03 915.25,438.07 922.50,428.20 929.75,383.30 937.00,363.28 944.25,383.59 951.50,365.00 958.75,399.75 966.00,400.46 973.25,401.03 980.50,345.83 987.75,371.57 995.00,367.43 1002.25,360.28 1009.50,371.57 1016.75,396.17 1024.00,391.88 1031.25,333.39 1038.50,387.73 1045.75,374.00 1053.00,385.30 1060.25,374.58 1067.50,384.16 1074.75,394.31 1082.00,385.30" fill="none" stroke="#ef5383" stroke-width="1.8" stroke-linejoin="miter" stroke-miterlimit="12"/>
<polyline points="661.50,398.89 668.75,326.53 676.00,361.13 683.25,331.82 690.50,385.73 697.75,354.13 705.00,403.89 712.25,397.60 719.50,390.02 726.75,469.10 734.00,367.43 741.25,386.59 748.50,369.29 755.75,360.99 763.00,405.18 770.25,390.45 777.50,363.85 784.75,379.01 792.00,393.88 799.25,369.29 806.50,403.32 813.75,400.03 821.00,376.15 828.25,353.84 835.50,356.13 842.75,389.02 850.00,399.46 857.25,374.72 864.50,398.60 871.75,422.05 879.00,352.41 886.25,354.27 893.50,365.85 900.75,354.70 908.00,391.31 915.25,425.77 922.50,417.76 929.75,370.14 937.00,350.70 944.25,372.15 951.50,348.84 958.75,390.16 966.00,392.45 973.25,392.02 980.50,330.96 987.75,361.99 995.00,354.84 1002.25,343.55 1009.50,362.56 1016.75,385.30 1024.00,372.15 1031.25,318.95 1038.50,372.15 1045.75,355.99 1053.00,371.00 1060.25,365.00 1067.50,370.43 1074.75,384.16 1082.00,377.58" fill="none" stroke="#efae3a" stroke-width="1.8" stroke-linejoin="miter" stroke-miterlimit="12"/>
<polyline points="661.50,385.59 668.75,304.65 676.00,338.40 683.25,313.66 690.50,368.57 697.75,336.82 705.00,389.02 712.25,381.44 719.50,373.58 726.75,467.67 734.00,351.70 741.25,371.43 748.50,356.99 755.75,345.83 763.00,390.74 770.25,381.58 777.50,343.69 784.75,355.84 792.00,373.29 799.25,348.69 806.50,387.88 813.75,386.88 821.00,362.99 828.25,331.25 835.50,340.54 842.75,366.86 850.00,385.59 857.25,360.13 864.50,380.01 871.75,399.60 879.00,324.96 886.25,338.68 893.50,342.26 900.75,338.68 908.00,376.58 915.25,413.90 922.50,401.17 929.75,347.12 937.00,333.25 944.25,358.42 951.50,335.68 958.75,373.43 966.00,368.57 973.25,377.29 980.50,320.24 987.75,348.84 995.00,339.26 1002.25,326.24 1009.50,348.26 1016.75,370.43 1024.00,357.85 1031.25,301.07 1038.50,349.41 1045.75,339.26 1053.00,354.27 1060.25,339.97 1067.50,354.27 1074.75,371.57 1082.00,363.85" fill="none" stroke="#2a80e2" stroke-width="1.8" stroke-linejoin="miter" stroke-miterlimit="12"/></svg>
<div class="t" style="right:948.70px;text-align:right;top:492.99px;font-size:9.7px;color:#3f4753;font-weight:400;">$0.00</div>
<div class="t" style="right:948.70px;text-align:right;top:464.39px;font-size:9.7px;color:#3f4753;font-weight:400;">$2,000.00</div>
<div class="t" style="right:948.70px;text-align:right;top:435.79px;font-size:9.7px;color:#3f4753;font-weight:400;">$4,000.00</div>
<div class="t" style="right:948.70px;text-align:right;top:407.19px;font-size:9.7px;color:#3f4753;font-weight:400;">$6,000.00</div>
<div class="t" style="right:948.70px;text-align:right;top:378.59px;font-size:9.7px;color:#3f4753;font-weight:400;">$8,000.00</div>
<div class="t" style="right:948.70px;text-align:right;top:349.99px;font-size:9.7px;color:#3f4753;font-weight:400;">$10,000.00</div>
<div class="t" style="right:948.70px;text-align:right;top:321.39px;font-size:9.7px;color:#3f4753;font-weight:400;">$12,000.00</div>
<div class="t" style="right:948.70px;text-align:right;top:292.79px;font-size:9.7px;color:#3f4753;font-weight:400;">$14,000.00</div>
<div class="b" style="left:1108px;top:219.3px;width:19px;height:19.4px;background:#eef0f3;border:1px solid #d6dae2;border-radius:5px"></div>
<svg style="left:1108px;top:219.3px" width="19" height="19" viewBox="0 0 19 19"><circle cx="9.5" cy="5.8" r="1.1" fill="#3d4450"/><circle cx="9.5" cy="9.7" r="1.1" fill="#3d4450"/><circle cx="9.5" cy="13.6" r="1.1" fill="#3d4450"/></svg>
<div class="b" style="left:968.3px;top:243.4px;width:158.6px;height:180px;background:#fff;border-radius:6px;box-shadow:0 1px 2px rgba(0,0,0,.08),4px 4px 14px rgba(0,0,0,.10);overflow:hidden"><div class="b" style="left:0;top:107px;width:159px;height:80px;background:#f4f5f7"></div><div class="b" style="left:0;top:140.3px;width:159px;height:1px;background:#e8eaee"></div></div>
<div class="b" style="left:972.4px;top:248px;width:149.6px;height:24.7px;border:3.3px solid #e9638f;border-radius:7px;background:#f3f4f6"></div>
<div class="t" style="left:981.10px;top:255.11px;font-size:10.5px;color:#1b1f26;font-weight:400;">New analysis from here</div>
<div class="t" style="left:981.10px;top:275.11px;font-size:10.5px;color:#1b1f26;font-weight:400;">Download CSV</div>
<div class="t" style="left:981.10px;top:294.81px;font-size:10.5px;color:#1b1f26;font-weight:400;">Download Excel</div>
<div class="b" style="left:974px;top:316.3px;width:147px;height:1px;background:#e3e6eb"></div>
<div class="t" style="left:981.10px;top:328.71px;font-size:10.5px;color:#1b1f26;font-weight:400;">View in workbook</div>
<div class="t" style="left:981.10px;top:362.27px;font-size:10.9px;color:#69717f;font-weight:400;">5 filters applied</div>
<svg style="left:1106px;top:362px" width="8" height="11" viewBox="0 0 8 11"><path d="M2 1.5l4 4-4 4" fill="none" stroke="#6b7280" stroke-width="1.2"/></svg>
<svg style="left:981px;top:395px" width="10" height="10" viewBox="0 0 10 10"><path d="M8.3 5.2A3.4 3.4 0 1 1 7.2 2.4" fill="none" stroke="#4b5563" stroke-width="1.3"/><path d="M5.8 1.2h2.6v2.6" fill="none" stroke="#4b5563" stroke-width="1.2"/></svg>
<div class="t" style="left:997.70px;top:394.82px;font-size:10.85px;color:#4b5563;font-weight:400;">Updated 9:20:24 AM</div>
<div class="b" style="left:639.5px;top:405.7px;width:870.5px;height:478px;background:linear-gradient(180deg,#f9f9fa 0%,#f9f9fa 35%,rgba(249,249,250,0) 100%),linear-gradient(90deg,#fbefef 0%,#f9e9ef 50%,#f2e7f4 100%)"></div>
<div class="b" style="left:646.8px;top:413.2px;width:8.6px;height:8.6px;border:1.4px solid #111;border-radius:50%"></div>
<div class="b" style="left:646.8px;top:423px;width:8.6px;height:1.3px;background:#f0398a"></div>
<div class="t" style="left:669.70px;top:414.67px;font-size:7px;color:#5a6270;font-weight:400;">File</div>
<div class="t" style="left:691.90px;top:414.67px;font-size:7px;color:#5a6270;font-weight:400;">View</div>
<div class="t" style="left:718.60px;top:414.67px;font-size:7px;color:#5a6270;font-weight:400;">Tab</div>
<div class="t" style="left:741.20px;top:414.67px;font-size:7px;color:#5a6270;font-weight:400;">Model</div>
<div class="t" style="left:771.50px;top:414.67px;font-size:7px;color:#5a6270;font-weight:400;">Help</div>
<div class="b" style="left:1394.2px;top:408.5px;width:62.2px;height:18.1px;background:#fff;border:1px solid #dfe2e8;border-radius:4px"></div>
<svg style="left:1402.5px;top:414px" width="7" height="7" viewBox="0 0 7 7"><path d="M3.5 0.3v6.4M0.3 3.5h6.4" stroke="#3b4351" stroke-width="1"/></svg>
<div class="t" style="left:1415.40px;top:414.47px;font-size:7px;color:#3b4351;font-weight:400;">Dashboard</div>
<div class="b" style="left:1464.4px;top:412.2px;width:11.6px;height:11.6px;border:1.1px solid #4b5361;border-radius:50%"></div>
<div class="t" style="left:1270.20px;width:400px;text-align:center;top:414.67px;font-size:7px;color:#4b5361;font-weight:700;">?</div>
<div class="b" style="left:1483.5px;top:410.2px;width:15.6px;height:15.6px;border-radius:50%;background:#4f4fd6"></div>
<div class="t" style="left:1291.30px;width:400px;text-align:center;top:414.23px;font-size:8px;color:#dedafa;font-weight:700;">A</div>
<svg style="left:646px;top:441px" width="16" height="12" viewBox="0 0 16 12"><path d="M2.8 9.3V2.3M1.5 3.6L2.8 2.3 4.1 3.6M6.2 2.3v7M4.9 8L6.2 9.3 7.5 8" fill="none" stroke="#5a6270" stroke-width="1.1"/><circle cx="11.7" cy="5.9" r="2.2" fill="#f0247d"/></svg>
<div class="b" style="left:647px;top:460px;width:8px;height:1px;background:#dde0e6"></div>
<div class="b" style="left:665.6px;top:433.2px;width:833.4px;height:440.3px;background:#fff;border:1px solid #eceef1;border-radius:5px;box-shadow:0 2px 6px rgba(200,80,130,.07);overflow:hidden"><div class="b" style="left:0;top:417.4px;width:834px;height:23px;background:#f4f5f7;border-top:1px solid #eceef1"></div></div>
<div class="b" style="left:843px;top:433.5px;width:1px;height:418px;background:#eceef1"></div>
<div class="b" style="left:666px;top:464px;width:833px;height:1px;background:#eceef1"></div>
<div class="t" style="left:672.30px;top:445.95px;font-size:7.5px;color:#2d333d;font-weight:700;">Order Transactions</div>
<svg style="left:747px;top:447.5px" width="6" height="4" viewBox="0 0 6 4"><path d="M0.3 0.5h5.4L3 3.5z" fill="#4b5361"/></svg>
<svg style="left:827.5px;top:443.5px" width="6" height="10" viewBox="0 0 6 10"><path d="M1 1l2 2 2-2M1 9l2-2 2 2" fill="none" stroke="#6b7280" stroke-width="0.9"/></svg>
<div class="b" style="left:672.3px;top:471.5px;width:165px;height:18.7px;border:1px solid #e4e7ec;border-radius:4px;background:#fff"></div>
<svg style="left:677.5px;top:477px" width="8" height="8" viewBox="0 0 8 8"><circle cx="3.5" cy="3.5" r="2.7" fill="none" stroke="#9aa2ae" stroke-width="0.9"/><path d="M5.5 5.5L7.5 7.5" stroke="#9aa2ae" stroke-width="0.9"/></svg>
<div class="t" style="left:690.60px;top:477.25px;font-size:7.5px;color:#9aa2ae;font-weight:400;">Search</div>
<svg style="left:822.5px;top:476.5px" width="8" height="8" viewBox="0 0 8 8"><path d="M1.5 0.5v7M4 0.5v7M6.5 0.5v7" stroke="#4b5361" stroke-width="0.9"/><path d="M0.5 2h2M3 5h2M5.5 3h2" stroke="#4b5361" stroke-width="1.1"/></svg>
<svg style="left:671.90px;top:502.50px" width="3" height="5" viewBox="0 0 3 5"><path d="M0.5 0.5v4L2.8 2.5z" fill="#4b5361"/></svg>
<div class="t" style="left:679.00px;top:501.67px;font-size:7px;color:#262c36;font-weight:700;">User Order Facts</div>
<svg style="left:671.90px;top:518.00px" width="3" height="5" viewBox="0 0 3 5"><path d="M0.5 0.5v4L2.8 2.5z" fill="#4b5361"/></svg>
<div class="t" style="left:679.00px;top:517.17px;font-size:7px;color:#262c36;font-weight:700;">Distribution Centers</div>
<svg style="left:670.90px;top:534.90px" width="5" height="3" viewBox="0 0 5 3"><path d="M0.5 0.5h4L2.5 2.8z" fill="#4b5361"/></svg>
<div class="t" style="left:679.00px;top:533.07px;font-size:7px;color:#262c36;font-weight:700;">Inventory Items</div>
<div class="b" style="left:805.2px;top:532.6px;width:11.6px;height:7.6px;border-radius:4px;background:#eceef1"></div>
<div class="t" style="left:611.00px;width:400px;text-align:center;top:533.50px;font-size:6.5px;color:#3b4351;font-weight:400;">1</div>
<div class="b" style="left:681.2px;top:604.7px;width:151.6px;height:13.2px;border-radius:3px;background:#f1f2f5"></div>
<div class="t" style="left:688.50px;top:549.57px;font-size:7px;color:#b8bec8;font-weight:400;font-style:italic;">#</div>
<div class="t" style="left:696.70px;top:549.41px;font-size:7.2px;color:#4b5361;font-weight:400;">Cost</div>
<svg style="left:676.00px;top:564.80px" width="4" height="6" viewBox="0 0 4 6"><path d="M0.7 0.7L3 3 0.7 5.3" fill="none" stroke="#6b7280" stroke-width="0.9"/></svg>
<svg style="left:688.00px;top:564.30px" width="7" height="7" viewBox="0 0 7 7"><rect x="0.6" y="0.9" width="5.8" height="5.5" rx="0.8" fill="none" stroke="#b8bec8" stroke-width="0.8"/><path d="M0.6 2.6h5.8" stroke="#b8bec8" stroke-width="0.7"/></svg>
<div class="t" style="left:696.70px;top:564.21px;font-size:7.2px;color:#4b5361;font-weight:400;">Created At</div>
<div class="t" style="left:688.50px;top:578.97px;font-size:7px;color:#b8bec8;font-weight:400;font-style:italic;">#</div>
<div class="t" style="left:696.70px;top:578.81px;font-size:7.2px;color:#4b5361;font-weight:400;">ID</div>
<div class="t" style="left:688.50px;top:593.07px;font-size:7px;color:#b8bec8;font-weight:400;">A</div>
<div class="t" style="left:696.70px;top:592.91px;font-size:7.2px;color:#4b5361;font-weight:400;">Product Brand</div>
<div class="t" style="left:688.50px;top:607.87px;font-size:7px;color:#b8bec8;font-weight:400;">A</div>
<div class="t" style="left:696.70px;top:607.71px;font-size:7.2px;color:#262c36;font-weight:700;">Product Category</div>
<div class="t" style="left:688.50px;top:622.37px;font-size:7px;color:#b8bec8;font-weight:400;">A</div>
<div class="t" style="left:696.70px;top:622.21px;font-size:7.2px;color:#4b5361;font-weight:400;">Product Department</div>
<div class="t" style="left:688.50px;top:636.97px;font-size:7px;color:#b8bec8;font-weight:400;font-style:italic;">#</div>
<div class="t" style="left:696.70px;top:636.81px;font-size:7.2px;color:#4b5361;font-weight:400;">Product Distribution Center ID</div>
<div class="t" style="left:688.50px;top:651.57px;font-size:7px;color:#b8bec8;font-weight:400;font-style:italic;">#</div>
<div class="t" style="left:696.70px;top:651.41px;font-size:7.2px;color:#4b5361;font-weight:400;">Product ID</div>
<div class="t" style="left:688.50px;top:666.07px;font-size:7px;color:#b8bec8;font-weight:400;">A</div>
<div class="t" style="left:696.70px;top:665.91px;font-size:7.2px;color:#4b5361;font-weight:400;">Product Name</div>
<div class="t" style="left:688.50px;top:680.57px;font-size:7px;color:#b8bec8;font-weight:400;font-style:italic;">#</div>
<div class="t" style="left:696.70px;top:680.41px;font-size:7.2px;color:#4b5361;font-weight:400;">Product Retail Price</div>
<div class="t" style="left:688.50px;top:695.17px;font-size:7px;color:#b8bec8;font-weight:400;">A</div>
<div class="t" style="left:696.70px;top:695.01px;font-size:7.2px;color:#4b5361;font-weight:400;">Product Sku</div>
<svg style="left:676.00px;top:709.90px" width="4" height="6" viewBox="0 0 4 6"><path d="M0.7 0.7L3 3 0.7 5.3" fill="none" stroke="#6b7280" stroke-width="0.9"/></svg>
<svg style="left:688.00px;top:709.40px" width="7" height="7" viewBox="0 0 7 7"><rect x="0.6" y="0.9" width="5.8" height="5.5" rx="0.8" fill="none" stroke="#b8bec8" stroke-width="0.8"/><path d="M0.6 2.6h5.8" stroke="#b8bec8" stroke-width="0.7"/></svg>
<div class="t" style="left:696.70px;top:709.31px;font-size:7.2px;color:#4b5361;font-weight:400;">Sold At</div>
<div class="t" style="left:688.50px;top:723.87px;font-size:7px;color:#5fb58a;font-weight:400;font-style:italic;">#</div>
<div class="t" style="left:696.70px;top:723.87px;font-size:7px;color:#27a06a;font-weight:400;">Inventory Items Count</div>
<svg style="left:670.90px;top:745.20px" width="5" height="3" viewBox="0 0 5 3"><path d="M0.5 0.5h4L2.5 2.8z" fill="#4b5361"/></svg>
<div class="t" style="left:679.00px;top:743.37px;font-size:7px;color:#262c36;font-weight:700;">Order Items</div>
<div class="b" style="left:804.4px;top:742.9px;width:12.3px;height:7.6px;border-radius:4px;background:#eceef1"></div>
<div class="t" style="left:610.50px;width:400px;text-align:center;top:743.80px;font-size:6.5px;color:#3b4351;font-weight:400;">5</div>
<svg style="left:675.00px;top:761.30px" width="6" height="4" viewBox="0 0 6 4"><path d="M0.7 0.7L3 3 5.3 0.7" fill="none" stroke="#6b7280" stroke-width="0.9"/></svg>
<svg style="left:688.00px;top:759.80px" width="7" height="7" viewBox="0 0 7 7"><rect x="0.6" y="0.9" width="5.8" height="5.5" rx="0.8" fill="none" stroke="#b8bec8" stroke-width="0.8"/><path d="M0.6 2.6h5.8" stroke="#b8bec8" stroke-width="0.7"/></svg>
<div class="t" style="left:696.70px;top:759.87px;font-size:7px;color:#262c36;font-weight:400;">Created At</div>
<div class="b" style="left:681.1px;top:771.1px;width:151.8px;height:12.7px;border-radius:3px;background:#f1f2f5"></div>
<div class="b" style="left:681.1px;top:786px;width:151.8px;height:12.9px;border-radius:3px;background:#f1f2f5"></div>
<svg style="left:695.10px;top:774.30px" width="7" height="7" viewBox="0 0 7 7"><rect x="0.6" y="0.9" width="5.8" height="5.5" rx="0.8" fill="none" stroke="#b8bec8" stroke-width="0.8"/><path d="M0.6 2.6h5.8" stroke="#b8bec8" stroke-width="0.7"/></svg>
<div class="t" style="left:703.80px;top:774.37px;font-size:7px;color:#262c36;font-weight:400;">Raw</div>
<svg style="left:695.10px;top:788.70px" width="7" height="7" viewBox="0 0 7 7"><rect x="0.6" y="0.9" width="5.8" height="5.5" rx="0.8" fill="none" stroke="#b8bec8" stroke-width="0.8"/><path d="M0.6 2.6h5.8" stroke="#b8bec8" stroke-width="0.7"/></svg>
<div class="t" style="left:703.80px;top:788.77px;font-size:7px;color:#262c36;font-weight:400;">Date</div>
<svg style="left:695.10px;top:803.20px" width="7" height="7" viewBox="0 0 7 7"><rect x="0.6" y="0.9" width="5.8" height="5.5" rx="0.8" fill="none" stroke="#b8bec8" stroke-width="0.8"/><path d="M0.6 2.6h5.8" stroke="#b8bec8" stroke-width="0.7"/></svg>
<div class="t" style="left:703.80px;top:803.27px;font-size:7px;color:#4b5361;font-weight:400;">Week</div>
<svg style="left:695.10px;top:817.60px" width="7" height="7" viewBox="0 0 7 7"><rect x="0.6" y="0.9" width="5.8" height="5.5" rx="0.8" fill="none" stroke="#b8bec8" stroke-width="0.8"/><path d="M0.6 2.6h5.8" stroke="#b8bec8" stroke-width="0.7"/></svg>
<div class="t" style="left:703.80px;top:817.67px;font-size:7px;color:#4b5361;font-weight:400;">Month</div>
<svg style="left:695.10px;top:832.00px" width="7" height="7" viewBox="0 0 7 7"><rect x="0.6" y="0.9" width="5.8" height="5.5" rx="0.8" fill="none" stroke="#b8bec8" stroke-width="0.8"/><path d="M0.6 2.6h5.8" stroke="#b8bec8" stroke-width="0.7"/></svg>
<div class="t" style="left:703.80px;top:832.07px;font-size:7px;color:#4b5361;font-weight:400;">Quarter</div>
<svg style="left:812.5px;top:774.5px" width="7" height="7" viewBox="0 0 7 7"><path d="M0.6 0.8h5.8L4.2 3.6v2.7L2.8 5.6V3.6z" fill="none" stroke="#4b5361" stroke-width="0.8" stroke-linejoin="round"/></svg>
<div class="b" style="left:666px;top:834px;width:177px;height:17.5px;background:#fff;border-top:1px solid #eceef1"></div>
<svg style="left:675px;top:840.5px" width="6" height="6" viewBox="0 0 6 6"><path d="M3 0.3v5.4M0.3 3h5.4" stroke="#4b5361" stroke-width="0.9"/></svg>
<div class="t" style="left:685.60px;top:839.87px;font-size:7px;color:#4b5361;font-weight:400;">Add Field</div>
<svg style="left:838px;top:846px" width="5" height="5" viewBox="0 0 5 5"><path d="M4.5 1L1 4.5M4.5 3L3 4.5" stroke="#9aa2ae" stroke-width="0.7"/></svg>
<svg style="left:675.5px;top:859.5px" width="8" height="7" viewBox="0 0 8 7"><path d="M0.5 1h7M0.5 3.5h7M0.5 6h7" stroke="#4b5361" stroke-width="0.9"/></svg>
<div class="b" style="left:692.7px;top:851.6px;width:101.7px;height:21.5px;background:#fff"></div>
<div class="b" style="left:692.7px;top:872.3px;width:101.7px;height:1.1px;background:linear-gradient(90deg,#9c6cf0,#f0457e)"></div>
<div class="t" style="left:699.60px;top:860.17px;font-size:7px;color:#1f242c;font-weight:700;">Category Performance</div>
<svg style="left:779px;top:861.5px" width="5" height="3" viewBox="0 0 5 3"><path d="M0.3 0.3h4.4L2.5 2.7z" fill="#3b4351"/></svg>
<svg style="left:803px;top:859.5px" width="7" height="7" viewBox="0 0 7 7"><path d="M3.5 0.3v6.4M0.3 3.5h6.4" stroke="#6b7280" stroke-width="0.9"/></svg>
<svg style="left:853.5px;top:444.5px" width="8" height="8" viewBox="0 0 8 8"><rect x="0.5" y="0.5" width="7" height="7" rx="1" fill="none" stroke="#6b7280" stroke-width="0.9"/><path d="M3 0.5v7" stroke="#6b7280" stroke-width="0.8"/><path d="M4.6 2.8l1.2 1.2-1.2 1.2" fill="none" stroke="#6b7280" stroke-width="0.7"/></svg>
<div class="b" style="left:869px;top:440px;width:53.7px;height:17.7px;border:1px solid #e3e6eb;border-radius:4px;background:#fff;overflow:hidden"><div class="b" style="left:26px;top:0;width:28px;height:18px;background:#edf2fb;border-left:1px solid #e3e6eb"></div></div>
<div class="t" style="left:874.00px;top:445.87px;font-size:7px;color:#4b5361;font-weight:400;">Table</div>
<div class="t" style="left:900.60px;top:445.87px;font-size:7px;color:#3556c9;font-weight:400;">Chart</div>
<svg style="left:930px;top:445px" width="9" height="8" viewBox="0 0 9 8"><path d="M0.5 1.2h8M0.5 4h8M0.5 6.8h8" stroke="#4b5361" stroke-width="0.8"/><path d="M3 0.2v2M6 3v2M2.5 5.8v2" stroke="#4b5361" stroke-width="1"/></svg>
<div class="t" style="left:945.60px;top:445.87px;font-size:7px;color:#4b5361;font-weight:400;">Options</div>
<svg style="left:1222px;top:444.5px" width="9" height="8" viewBox="0 0 9 8"><path d="M4.5 0.6L8.4 7.4H0.6z" fill="none" stroke="#f2b233" stroke-width="0.9" stroke-linejoin="round"/><path d="M4.5 3v2.2" stroke="#f2b233" stroke-width="0.9"/><circle cx="4.5" cy="6.2" r="0.45" fill="#f2b233"/></svg>
<div class="t" style="left:1235.30px;top:445.66px;font-size:7.25px;color:#6b7280;font-weight:400;">10 rows, 59 pivot columns, from cache</div>
<svg style="left:1369.5px;top:444px" width="8" height="9" viewBox="0 0 8 9"><path d="M4 0.5v5M2 3.6L4 5.6 6 3.6" fill="none" stroke="#4b5361" stroke-width="0.9"/><path d="M0.6 6v2h6.8V6" fill="none" stroke="#4b5361" stroke-width="0.9"/></svg>
<div class="t" style="left:1389.00px;top:445.87px;font-size:7px;color:#4b5361;font-weight:400;">Limits</div>
<svg style="left:1414.2px;top:447.7px" width="5" height="3" viewBox="0 0 5 3"><path d="M0.3 0.3h4.4L2.5 2.7z" fill="#3b4351"/></svg>
<div class="b" style="left:1430.4px;top:440.3px;width:31.8px;height:16.9px;border:1px solid #e3e6eb;border-radius:4px;background:#fff"><div class="b" style="left:18.4px;top:0;width:1px;height:15px;background:#e3e6eb"></div></div>
<div class="t" style="left:1434.00px;top:445.87px;font-size:7px;color:#3b4351;font-weight:400;">SQL</div>
<svg style="left:1453.2px;top:447.7px" width="5" height="3" viewBox="0 0 5 3"><path d="M0.3 0.3h4.4L2.5 2.7z" fill="#262c36"/></svg>
<div class="b" style="left:1468.3px;top:440.3px;width:24.1px;height:16.9px;border:1px solid #e3e6eb;border-radius:9px;background:#fff"></div>
<svg style="left:1476.5px;top:444.8px" width="7" height="8" viewBox="0 0 7 8"><path d="M1 0.8v6.4L6 4z" fill="none" stroke="#7b8391" stroke-width="0.9" stroke-linejoin="round"/></svg>
<div class="b" style="left:851.3px;top:471px;width:641.4px;height:19.3px;border-radius:10px;background:linear-gradient(90deg,#fce3cf 0%,#fad5de 40%,#e9dbf9 100%);padding:1px"><div style="width:100%;height:100%;background:#fff;border-radius:9px"></div></div>
<svg style="left:858.5px;top:477px" width="9" height="8" viewBox="0 0 9 8"><path d="M3 1.6L4.1 3.5 6 4.5 4.1 5.5 3 7.4 1.9 5.5 0 4.5 1.9 3.5z" fill="#f58a50"/><rect x="5.9" y="0.6" width="1.6" height="1.6" rx="0.4" fill="#f58a50"/><rect x="6" y="6.2" width="1.6" height="1.6" rx="0.4" fill="#f58a50"/></svg>
<div class="b" style="left:874px;top:475.5px;width:0.9px;height:10px;background:#3b4351"></div>
<div class="t" style="left:875.20px;top:476.83px;font-size:8px;color:#8a93a2;font-weight:400;">Ask a question of your data</div>
<svg style="left:1476.5px;top:476.7px" width="8" height="7" viewBox="0 0 8 7"><path d="M0.5 3.5h6.5M4.3 0.8L7 3.5 4.3 6.2" fill="none" stroke="#6b7280" stroke-width="0.9"/></svg>
<div class="t" style="left:853.30px;top:499.88px;font-size:6.4px;color:#9aa2ae;font-weight:400;">Users</div>
<div class="t" style="left:853.30px;top:507.27px;font-size:7px;color:#262c36;font-weight:700;">ID</div>
<div class="b" style="left:853.30px;top:516.7px;width:133px;height:16.9px;border:1px solid #eceef2;border-radius:4px;background:#fff"></div>
<div class="t" style="left:860.30px;top:521.67px;font-size:7px;color:#2d333d;font-weight:400;">= any value</div>
<div class="t" style="left:995.30px;top:499.88px;font-size:6.4px;color:#9aa2ae;font-weight:400;">Users</div>
<div class="t" style="left:995.30px;top:507.27px;font-size:7px;color:#262c36;font-weight:700;">State</div>
<div class="b" style="left:995.30px;top:516.7px;width:133px;height:16.9px;border:1px solid #eceef2;border-radius:4px;background:#fff"></div>
<div class="t" style="left:1002.30px;top:521.67px;font-size:7px;color:#2d333d;font-weight:400;">is: any value</div>
<div class="t" style="left:1137.30px;top:499.88px;font-size:6.4px;color:#9aa2ae;font-weight:400;">Users</div>
<div class="t" style="left:1137.30px;top:507.27px;font-size:7px;color:#262c36;font-weight:700;">Gender</div>
<div class="b" style="left:1137.30px;top:516.7px;width:133px;height:16.9px;border:1px solid #eceef2;border-radius:4px;background:#fff"></div>
<div class="t" style="left:1144.30px;top:521.67px;font-size:7px;color:#2d333d;font-weight:400;">is: any value</div>
<div class="t" style="left:1279.30px;top:499.88px;font-size:6.4px;color:#9aa2ae;font-weight:400;">Users</div>
<div class="t" style="left:1279.30px;top:507.27px;font-size:7px;color:#262c36;font-weight:700;">Country</div>
<div class="b" style="left:1279.30px;top:516.7px;width:133px;height:16.9px;border:1px solid #eceef2;border-radius:4px;background:#fff"></div>
<div class="t" style="left:1286.30px;top:521.67px;font-size:7px;color:#2d333d;font-weight:400;">is: any value</div>
<div class="b" style="left:1421.6px;top:516.7px;width:43.1px;height:16.7px;border:1px solid #e8eaee;border-radius:4px;background:#fff"></div>
<svg style="left:1431px;top:520.8px" width="8" height="8" viewBox="0 0 8 8"><path d="M0.7 0.8h6.6L4.8 4v3.2L3.2 6.4V4z" fill="none" stroke="#4b5361" stroke-width="0.9" stroke-linejoin="round"/></svg>
<div class="t" style="left:1443.50px;top:521.67px;font-size:7px;color:#4b5361;font-weight:400;">+ 3</div>
<div class="b" style="left:844px;top:541.3px;width:655px;height:1px;background:#eceef1"></div>
<div class="t" style="left:854.80px;top:553.17px;font-size:7px;color:#5f6a7b;font-weight:400;">Total Sale Price</div>
<svg style="left:0;top:0" width="1600" height="900" viewBox="0 0 1600 900"><line x1="892.5" y1="811.60" x2="1481.5" y2="811.60" stroke="#eef2f6" stroke-width="0.8"/><line x1="892.5" y1="794.27" x2="1481.5" y2="794.27" stroke="#eef2f6" stroke-width="0.8"/><line x1="892.5" y1="776.94" x2="1481.5" y2="776.94" stroke="#eef2f6" stroke-width="0.8"/><line x1="892.5" y1="759.61" x2="1481.5" y2="759.61" stroke="#eef2f6" stroke-width="0.8"/><line x1="892.5" y1="742.28" x2="1481.5" y2="742.28" stroke="#eef2f6" stroke-width="0.8"/><line x1="892.5" y1="724.95" x2="1481.5" y2="724.95" stroke="#eef2f6" stroke-width="0.8"/><line x1="892.5" y1="707.62" x2="1481.5" y2="707.62" stroke="#eef2f6" stroke-width="0.8"/><line x1="892.5" y1="690.29" x2="1481.5" y2="690.29" stroke="#eef2f6" stroke-width="0.8"/><line x1="892.5" y1="672.96" x2="1481.5" y2="672.96" stroke="#eef2f6" stroke-width="0.8"/><line x1="892.5" y1="655.63" x2="1481.5" y2="655.63" stroke="#eef2f6" stroke-width="0.8"/><line x1="892.5" y1="638.30" x2="1481.5" y2="638.30" stroke="#eef2f6" stroke-width="0.8"/><line x1="892.5" y1="620.97" x2="1481.5" y2="620.97" stroke="#eef2f6" stroke-width="0.8"/><line x1="892.5" y1="603.64" x2="1481.5" y2="603.64" stroke="#eef2f6" stroke-width="0.8"/><line x1="892.5" y1="586.31" x2="1481.5" y2="586.31" stroke="#eef2f6" stroke-width="0.8"/><line x1="892.5" y1="568.98" x2="1481.5" y2="568.98" stroke="#eef2f6" stroke-width="0.8"/><line x1="906.09" y1="569" x2="906.09" y2="816.5" stroke="#eef2f6" stroke-width="0.8"/><line x1="926.27" y1="569" x2="926.27" y2="816.5" stroke="#eef2f6" stroke-width="0.8"/><line x1="946.45" y1="569" x2="946.45" y2="816.5" stroke="#eef2f6" stroke-width="0.8"/><line x1="966.63" y1="569" x2="966.63" y2="816.5" stroke="#eef2f6" stroke-width="0.8"/><line x1="986.81" y1="569" x2="986.81" y2="816.5" stroke="#eef2f6" stroke-width="0.8"/><line x1="1006.99" y1="569" x2="1006.99" y2="816.5" stroke="#eef2f6" stroke-width="0.8"/><line x1="1027.17" y1="569" x2="1027.17" y2="816.5" stroke="#eef2f6" stroke-width="0.8"/><line x1="1047.35" y1="569" x2="1047.35" y2="816.5" stroke="#eef2f6" stroke-width="0.8"/><line x1="1067.53" y1="569" x2="1067.53" y2="816.5" stroke="#eef2f6" stroke-width="0.8"/><line x1="1087.71" y1="569" x2="1087.71" y2="816.5" stroke="#eef2f6" stroke-width="0.8"/><line x1="1107.89" y1="569" x2="1107.89" y2="816.5" stroke="#eef2f6" stroke-width="0.8"/><line x1="1128.07" y1="569" x2="1128.07" y2="816.5" stroke="#eef2f6" stroke-width="0.8"/><line x1="1148.25" y1="569" x2="1148.25" y2="816.5" stroke="#eef2f6" stroke-width="0.8"/><line x1="1168.43" y1="569" x2="1168.43" y2="816.5" stroke="#eef2f6" stroke-width="0.8"/><line x1="1188.61" y1="569" x2="1188.61" y2="816.5" stroke="#eef2f6" stroke-width="0.8"/><line x1="1208.79" y1="569" x2="1208.79" y2="816.5" stroke="#eef2f6" stroke-width="0.8"/><line x1="1228.97" y1="569" x2="1228.97" y2="816.5" stroke="#eef2f6" stroke-width="0.8"/><line x1="1249.15" y1="569" x2="1249.15" y2="816.5" stroke="#eef2f6" stroke-width="0.8"/><line x1="1269.33" y1="569" x2="1269.33" y2="816.5" stroke="#eef2f6" stroke-width="0.8"/><line x1="1289.51" y1="569" x2="1289.51" y2="816.5" stroke="#eef2f6" stroke-width="0.8"/><line x1="1309.69" y1="569" x2="1309.69" y2="816.5" stroke="#eef2f6" stroke-width="0.8"/><line x1="1329.87" y1="569" x2="1329.87" y2="816.5" stroke="#eef2f6" stroke-width="0.8"/><line x1="1350.05" y1="569" x2="1350.05" y2="816.5" stroke="#eef2f6" stroke-width="0.8"/><line x1="1370.23" y1="569" x2="1370.23" y2="816.5" stroke="#eef2f6" stroke-width="0.8"/><line x1="1390.41" y1="569" x2="1390.41" y2="816.5" stroke="#eef2f6" stroke-width="0.8"/><line x1="1410.59" y1="569" x2="1410.59" y2="816.5" stroke="#eef2f6" stroke-width="0.8"/><line x1="1430.77" y1="569" x2="1430.77" y2="816.5" stroke="#eef2f6" stroke-width="0.8"/><line x1="1450.95" y1="569" x2="1450.95" y2="816.5" stroke="#eef2f6" stroke-width="0.8"/><line x1="1471.13" y1="569" x2="1471.13" y2="816.5" stroke="#eef2f6" stroke-width="0.8"/><line x1="896" y1="569" x2="896" y2="812" stroke="#e6e9ee" stroke-width="0.8"/><polygon points="896.00,804.67 906.09,792.71 916.18,785.43 926.27,794.79 936.36,796.35 946.45,797.74 956.54,805.01 966.63,794.79 976.72,798.43 986.81,804.15 996.90,794.10 1006.99,796.35 1017.08,798.43 1027.17,795.48 1037.26,800.34 1047.35,797.74 1057.44,796.00 1067.53,794.62 1077.62,795.48 1087.71,799.82 1097.80,793.40 1107.89,798.43 1117.98,798.43 1128.07,787.86 1138.16,793.40 1148.25,795.48 1158.34,798.43 1168.43,798.43 1178.52,797.74 1188.61,799.82 1198.70,798.43 1208.79,795.48 1218.88,801.38 1228.97,799.82 1239.06,795.48 1249.15,801.72 1259.24,799.82 1269.33,796.35 1279.42,796.35 1289.51,787.86 1299.60,797.74 1309.69,795.14 1319.78,797.74 1329.87,801.90 1339.96,792.71 1350.05,793.40 1360.14,794.10 1370.23,792.71 1380.32,799.12 1390.41,797.39 1400.50,800.68 1410.59,788.38 1420.68,788.38 1430.77,790.46 1440.86,796.52 1450.95,793.75 1461.04,799.82 1471.13,794.10 1481.22,793.40 1481.22,811.60 1471.13,811.60 1461.04,811.60 1450.95,811.60 1440.86,811.60 1430.77,811.60 1420.68,811.60 1410.59,811.60 1400.50,811.60 1390.41,811.60 1380.32,811.60 1370.23,811.60 1360.14,811.60 1350.05,811.60 1339.96,811.60 1329.87,811.60 1319.78,811.60 1309.69,811.60 1299.60,811.60 1289.51,811.60 1279.42,811.60 1269.33,811.60 1259.24,811.60 1249.15,811.60 1239.06,811.60 1228.97,811.60 1218.88,811.60 1208.79,811.60 1198.70,811.60 1188.61,811.60 1178.52,811.60 1168.43,811.60 1158.34,811.60 1148.25,811.60 1138.16,811.60 1128.07,811.60 1117.98,811.60 1107.89,811.60 1097.80,811.60 1087.71,811.60 1077.62,811.60 1067.53,811.60 1057.44,811.60 1047.35,811.60 1037.26,811.60 1027.17,811.60 1017.08,811.60 1006.99,811.60 996.90,811.60 986.81,811.60 976.72,811.60 966.63,811.60 956.54,811.60 946.45,811.60 936.36,811.60 926.27,811.60 916.18,811.60 906.09,811.60 896.00,811.60" fill="#dda0e2"/>
<polygon points="896.00,796.35 906.09,774.69 916.18,776.07 926.27,775.38 936.36,786.12 946.45,787.68 956.54,800.68 966.63,789.07 976.72,791.15 986.81,799.82 996.90,786.12 1006.99,783.35 1017.08,793.40 1027.17,786.82 1037.26,792.19 1047.35,784.74 1057.44,789.07 1067.53,787.68 1077.62,786.12 1087.71,792.71 1097.80,789.07 1107.89,793.40 1117.98,783.35 1128.07,774.34 1138.16,776.07 1148.25,784.05 1158.34,792.02 1168.43,791.15 1178.52,792.02 1188.61,793.75 1198.70,788.38 1208.79,790.46 1218.88,786.12 1228.97,778.67 1239.06,786.82 1249.15,793.75 1259.24,794.10 1269.33,785.43 1279.42,785.43 1289.51,779.02 1299.60,791.15 1309.69,791.67 1319.78,788.38 1329.87,795.83 1339.96,783.35 1350.05,781.62 1360.14,780.06 1370.23,784.39 1380.32,786.12 1390.41,786.82 1400.50,791.15 1410.59,776.42 1420.68,775.73 1430.77,779.71 1440.86,780.41 1450.95,784.39 1461.04,782.14 1471.13,781.10 1481.22,782.49 1481.22,793.40 1471.13,794.10 1461.04,799.82 1450.95,793.75 1440.86,796.52 1430.77,790.46 1420.68,788.38 1410.59,788.38 1400.50,800.68 1390.41,797.39 1380.32,799.12 1370.23,792.71 1360.14,794.10 1350.05,793.40 1339.96,792.71 1329.87,801.90 1319.78,797.74 1309.69,795.14 1299.60,797.74 1289.51,787.86 1279.42,796.35 1269.33,796.35 1259.24,799.82 1249.15,801.72 1239.06,795.48 1228.97,799.82 1218.88,801.38 1208.79,795.48 1198.70,798.43 1188.61,799.82 1178.52,797.74 1168.43,798.43 1158.34,798.43 1148.25,795.48 1138.16,793.40 1128.07,787.86 1117.98,798.43 1107.89,798.43 1097.80,793.40 1087.71,799.82 1077.62,795.48 1067.53,794.62 1057.44,796.00 1047.35,797.74 1037.26,800.34 1027.17,795.48 1017.08,798.43 1006.99,796.35 996.90,794.10 986.81,804.15 976.72,798.43 966.63,794.79 956.54,805.01 946.45,797.74 936.36,796.35 926.27,794.79 916.18,785.43 906.09,792.71 896.00,804.67" fill="#c9ad9c"/>
<polygon points="896.00,792.71 906.09,750.77 916.18,765.85 926.27,758.92 936.36,775.38 946.45,775.73 956.54,785.43 966.63,784.39 976.72,785.43 986.81,797.04 996.90,770.18 1006.99,776.77 1017.08,784.74 1027.17,768.10 1037.26,786.82 1047.35,784.05 1057.44,784.39 1067.53,775.38 1077.62,773.82 1087.71,783.35 1097.80,784.39 1107.89,792.02 1117.98,766.72 1128.07,758.74 1138.16,761.52 1148.25,777.46 1158.34,789.76 1168.43,783.35 1178.52,789.07 1188.61,784.74 1198.70,775.38 1208.79,784.05 1218.88,774.51 1228.97,762.38 1239.06,779.71 1249.15,790.46 1259.24,789.07 1269.33,778.15 1279.42,776.07 1289.51,765.85 1299.60,782.49 1309.69,788.03 1319.78,778.15 1329.87,791.15 1339.96,750.77 1350.05,778.15 1360.14,765.16 1370.23,758.74 1380.32,772.43 1390.41,779.71 1400.50,771.74 1410.59,768.10 1420.68,757.18 1430.77,768.10 1440.86,773.13 1450.95,769.49 1461.04,777.46 1471.13,779.71 1481.22,768.10 1481.22,782.49 1471.13,781.10 1461.04,782.14 1450.95,784.39 1440.86,780.41 1430.77,779.71 1420.68,775.73 1410.59,776.42 1400.50,791.15 1390.41,786.82 1380.32,786.12 1370.23,784.39 1360.14,780.06 1350.05,781.62 1339.96,783.35 1329.87,795.83 1319.78,788.38 1309.69,791.67 1299.60,791.15 1289.51,779.02 1279.42,785.43 1269.33,785.43 1259.24,794.10 1249.15,793.75 1239.06,786.82 1228.97,778.67 1218.88,786.12 1208.79,790.46 1198.70,788.38 1188.61,793.75 1178.52,792.02 1168.43,791.15 1158.34,792.02 1148.25,784.05 1138.16,776.07 1128.07,774.34 1117.98,783.35 1107.89,793.40 1097.80,789.07 1087.71,792.71 1077.62,786.12 1067.53,787.68 1057.44,789.07 1047.35,784.74 1037.26,792.19 1027.17,786.82 1017.08,793.40 1006.99,783.35 996.90,786.12 986.81,799.82 976.72,791.15 966.63,789.07 956.54,800.68 946.45,787.68 936.36,786.12 926.27,775.38 916.18,776.07 906.09,774.69 896.00,796.35" fill="#f29c9c"/>
<polygon points="896.00,782.49 906.09,731.54 916.18,750.08 926.27,736.21 936.36,761.52 946.45,762.38 956.54,768.10 966.63,771.39 976.72,771.74 986.81,788.38 996.90,751.46 1006.99,759.44 1017.08,772.43 1027.17,750.08 1037.26,772.43 1047.35,772.43 1057.44,761.52 1067.53,758.05 1077.62,755.80 1087.71,767.41 1097.80,768.79 1107.89,784.74 1117.98,751.46 1128.07,745.05 1138.16,744.19 1148.25,759.44 1158.34,769.49 1168.43,768.79 1178.52,771.74 1188.61,772.43 1198.70,764.12 1208.79,765.85 1218.88,752.85 1228.97,746.44 1239.06,764.46 1249.15,784.39 1259.24,779.71 1269.33,758.05 1279.42,759.44 1289.51,747.13 1299.60,761.52 1309.69,771.39 1319.78,766.72 1329.87,771.91 1339.96,729.80 1350.05,755.45 1360.14,754.41 1370.23,740.55 1380.32,759.78 1390.41,761.34 1400.50,762.38 1410.59,748.52 1420.68,740.55 1430.77,752.85 1440.86,754.41 1450.95,752.68 1461.04,772.43 1471.13,748.52 1481.22,753.72 1481.22,768.10 1471.13,779.71 1461.04,777.46 1450.95,769.49 1440.86,773.13 1430.77,768.10 1420.68,757.18 1410.59,768.10 1400.50,771.74 1390.41,779.71 1380.32,772.43 1370.23,758.74 1360.14,765.16 1350.05,778.15 1339.96,750.77 1329.87,791.15 1319.78,778.15 1309.69,788.03 1299.60,782.49 1289.51,765.85 1279.42,776.07 1269.33,778.15 1259.24,789.07 1249.15,790.46 1239.06,779.71 1228.97,762.38 1218.88,774.51 1208.79,784.05 1198.70,775.38 1188.61,784.74 1178.52,789.07 1168.43,783.35 1158.34,789.76 1148.25,777.46 1138.16,761.52 1128.07,758.74 1117.98,766.72 1107.89,792.02 1097.80,784.39 1087.71,783.35 1077.62,773.82 1067.53,775.38 1057.44,784.39 1047.35,784.05 1037.26,786.82 1027.17,768.10 1017.08,784.74 1006.99,776.77 996.90,770.18 986.81,797.04 976.72,785.43 966.63,784.39 956.54,785.43 946.45,775.73 936.36,775.38 926.27,758.92 916.18,765.85 906.09,750.77 896.00,792.71" fill="#a4aaef"/>
<polygon points="896.00,772.43 906.09,715.42 916.18,739.85 926.27,719.75 936.36,745.75 946.45,744.01 956.54,760.13 966.63,762.38 976.72,759.44 986.81,781.79 996.90,742.45 1006.99,750.77 1017.08,755.80 1027.17,737.77 1037.26,758.05 1047.35,760.13 1057.44,750.77 1067.53,748.52 1077.62,742.80 1087.71,754.41 1097.80,760.13 1107.89,775.38 1117.98,739.16 1128.07,728.42 1138.16,734.83 1148.25,745.75 1158.34,756.49 1168.43,762.38 1178.52,763.08 1188.61,764.12 1198.70,750.08 1208.79,752.16 1218.88,734.83 1228.97,732.40 1239.06,750.08 1249.15,780.41 1259.24,779.02 1269.33,745.05 1279.42,747.83 1289.51,739.85 1299.60,748.52 1309.69,761.52 1319.78,750.77 1329.87,764.81 1339.96,715.42 1350.05,739.85 1360.14,744.19 1370.23,726.86 1380.32,742.80 1390.41,754.41 1400.50,752.16 1410.59,731.19 1420.68,733.44 1430.77,737.77 1440.86,742.11 1450.95,739.85 1461.04,760.13 1471.13,738.47 1481.22,742.11 1481.22,753.72 1471.13,748.52 1461.04,772.43 1450.95,752.68 1440.86,754.41 1430.77,752.85 1420.68,740.55 1410.59,748.52 1400.50,762.38 1390.41,761.34 1380.32,759.78 1370.23,740.55 1360.14,754.41 1350.05,755.45 1339.96,729.80 1329.87,771.91 1319.78,766.72 1309.69,771.39 1299.60,761.52 1289.51,747.13 1279.42,759.44 1269.33,758.05 1259.24,779.71 1249.15,784.39 1239.06,764.46 1228.97,746.44 1218.88,752.85 1208.79,765.85 1198.70,764.12 1188.61,772.43 1178.52,771.74 1168.43,768.79 1158.34,769.49 1148.25,759.44 1138.16,744.19 1128.07,745.05 1117.98,751.46 1107.89,784.74 1097.80,768.79 1087.71,767.41 1077.62,755.80 1067.53,758.05 1057.44,761.52 1047.35,772.43 1037.26,772.43 1027.17,750.08 1017.08,772.43 1006.99,759.44 996.90,751.46 986.81,788.38 976.72,771.74 966.63,771.39 956.54,768.10 946.45,762.38 936.36,761.52 926.27,736.21 916.18,750.08 906.09,731.54 896.00,782.49" fill="#a3c9a1"/>
<polygon points="896.00,754.41 906.09,689.25 916.18,720.44 926.27,674.35 936.36,727.55 946.45,716.11 956.54,750.08 966.63,745.75 976.72,744.01 986.81,780.41 996.90,714.55 1006.99,735.00 1017.08,728.07 1027.17,720.44 1037.26,743.49 1047.35,737.77 1057.44,736.21 1067.53,737.08 1077.62,731.88 1087.71,735.52 1097.80,749.39 1107.89,762.38 1117.98,722.87 1128.07,705.19 1138.16,714.55 1148.25,730.84 1158.34,739.16 1168.43,744.53 1178.52,739.16 1188.61,755.97 1198.70,715.77 1208.79,704.67 1218.88,717.15 1228.97,715.42 1239.06,737.95 1249.15,771.74 1259.24,755.97 1269.33,722.00 1279.42,729.80 1289.51,734.13 1299.60,732.75 1309.69,748.35 1319.78,738.47 1329.87,756.49 1339.96,699.47 1350.05,719.75 1360.14,726.86 1370.23,697.22 1380.32,717.50 1390.41,737.77 1400.50,739.68 1410.59,705.19 1420.68,718.19 1430.77,715.42 1440.86,720.44 1450.95,712.47 1461.04,750.08 1471.13,729.80 1481.22,722.52 1481.22,742.11 1471.13,738.47 1461.04,760.13 1450.95,739.85 1440.86,742.11 1430.77,737.77 1420.68,733.44 1410.59,731.19 1400.50,752.16 1390.41,754.41 1380.32,742.80 1370.23,726.86 1360.14,744.19 1350.05,739.85 1339.96,715.42 1329.87,764.81 1319.78,750.77 1309.69,761.52 1299.60,748.52 1289.51,739.85 1279.42,747.83 1269.33,745.05 1259.24,779.02 1249.15,780.41 1239.06,750.08 1228.97,732.40 1218.88,734.83 1208.79,752.16 1198.70,750.08 1188.61,764.12 1178.52,763.08 1168.43,762.38 1158.34,756.49 1148.25,745.75 1138.16,734.83 1128.07,728.42 1117.98,739.16 1107.89,775.38 1097.80,760.13 1087.71,754.41 1077.62,742.80 1067.53,748.52 1057.44,750.77 1047.35,760.13 1037.26,758.05 1027.17,737.77 1017.08,755.80 1006.99,750.77 996.90,742.45 986.81,781.79 976.72,759.44 966.63,762.38 956.54,760.13 946.45,744.01 936.36,745.75 926.27,719.75 916.18,739.85 906.09,715.42 896.00,772.43" fill="#f9c39a"/>
<polygon points="896.00,724.08 906.09,635.70 916.18,686.82 926.27,634.49 936.36,699.47 946.45,683.01 956.54,718.19 966.63,715.77 976.72,714.03 986.81,778.67 996.90,678.16 1006.99,703.29 1017.08,691.85 1027.17,679.20 1037.26,720.44 1047.35,705.89 1057.44,693.41 1067.53,692.72 1077.62,708.66 1087.71,694.45 1097.80,711.61 1107.89,722.87 1117.98,697.22 1128.07,667.24 1138.16,658.75 1148.25,703.98 1158.34,711.26 1168.43,707.45 1178.52,708.14 1188.61,732.06 1198.70,679.03 1208.79,668.63 1218.88,672.09 1228.97,677.81 1239.06,713.69 1249.15,748.35 1259.24,736.04 1269.33,685.44 1279.42,689.60 1289.51,692.89 1299.60,687.17 1309.69,707.45 1319.78,707.45 1329.87,721.83 1339.96,662.39 1350.05,689.08 1360.14,689.08 1370.23,653.72 1380.32,683.36 1390.41,696.53 1400.50,695.14 1410.59,666.72 1420.68,686.82 1430.77,674.00 1440.86,685.61 1450.95,684.74 1461.04,697.92 1471.13,693.58 1481.22,687.69 1481.22,722.52 1471.13,729.80 1461.04,750.08 1450.95,712.47 1440.86,720.44 1430.77,715.42 1420.68,718.19 1410.59,705.19 1400.50,739.68 1390.41,737.77 1380.32,717.50 1370.23,697.22 1360.14,726.86 1350.05,719.75 1339.96,699.47 1329.87,756.49 1319.78,738.47 1309.69,748.35 1299.60,732.75 1289.51,734.13 1279.42,729.80 1269.33,722.00 1259.24,755.97 1249.15,771.74 1239.06,737.95 1228.97,715.42 1218.88,717.15 1208.79,704.67 1198.70,715.77 1188.61,755.97 1178.52,739.16 1168.43,744.53 1158.34,739.16 1148.25,730.84 1138.16,714.55 1128.07,705.19 1117.98,722.87 1107.89,762.38 1097.80,749.39 1087.71,735.52 1077.62,731.88 1067.53,737.08 1057.44,736.21 1047.35,737.77 1037.26,743.49 1027.17,720.44 1017.08,728.07 1006.99,735.00 996.90,714.55 986.81,780.41 976.72,744.01 966.63,745.75 956.54,750.08 946.45,716.11 936.36,727.55 926.27,674.35 916.18,720.44 906.09,689.25 896.00,754.41" fill="#9fdcda"/>
<polygon points="896.00,699.47 906.09,620.45 916.18,661.70 926.27,618.89 936.36,691.85 946.45,660.14 956.54,708.49 966.63,702.94 976.72,696.36 986.81,777.81 996.90,667.59 1006.99,692.72 1017.08,680.93 1027.17,655.63 1037.26,708.14 1047.35,686.82 1057.44,661.87 1067.53,680.07 1077.62,697.57 1087.71,671.23 1097.80,706.41 1107.89,700.69 1117.98,678.68 1128.07,653.20 1138.16,652.51 1148.25,692.54 1158.34,704.33 1168.43,679.89 1178.52,701.90 1188.61,727.38 1198.70,645.23 1208.79,659.10 1218.88,667.76 1228.97,653.38 1239.06,696.88 1249.15,739.33 1259.24,727.38 1269.33,672.96 1279.42,648.70 1289.51,673.31 1299.60,650.78 1309.69,692.89 1319.78,693.76 1329.87,694.45 1339.96,627.56 1350.05,658.75 1360.14,653.72 1370.23,645.06 1380.32,658.75 1390.41,688.56 1400.50,683.36 1410.59,612.48 1420.68,678.33 1430.77,661.70 1440.86,675.39 1450.95,662.39 1461.04,674.00 1471.13,686.30 1481.22,675.39 1481.22,687.69 1471.13,693.58 1461.04,697.92 1450.95,684.74 1440.86,685.61 1430.77,674.00 1420.68,686.82 1410.59,666.72 1400.50,695.14 1390.41,696.53 1380.32,683.36 1370.23,653.72 1360.14,689.08 1350.05,689.08 1339.96,662.39 1329.87,721.83 1319.78,707.45 1309.69,707.45 1299.60,687.17 1289.51,692.89 1279.42,689.60 1269.33,685.44 1259.24,736.04 1249.15,748.35 1239.06,713.69 1228.97,677.81 1218.88,672.09 1208.79,668.63 1198.70,679.03 1188.61,732.06 1178.52,708.14 1168.43,707.45 1158.34,711.26 1148.25,703.98 1138.16,658.75 1128.07,667.24 1117.98,697.22 1107.89,722.87 1097.80,711.61 1087.71,694.45 1077.62,708.66 1067.53,692.72 1057.44,693.41 1047.35,705.89 1037.26,720.44 1027.17,679.20 1017.08,691.85 1006.99,703.29 996.90,678.16 986.81,778.67 976.72,714.03 966.63,715.77 956.54,718.19 946.45,683.01 936.36,699.47 926.27,634.49 916.18,686.82 906.09,635.70 896.00,724.08" fill="#f8b0c7"/>
<polygon points="896.00,691.85 906.09,604.16 916.18,646.10 926.27,610.57 936.36,675.91 946.45,637.61 956.54,697.92 966.63,690.29 976.72,681.11 986.81,776.94 996.90,653.72 1006.99,676.95 1017.08,655.98 1027.17,645.93 1037.26,699.47 1047.35,681.62 1057.44,649.39 1067.53,667.76 1077.62,685.78 1087.71,655.98 1097.80,697.22 1107.89,693.24 1117.98,664.30 1128.07,637.26 1138.16,640.03 1148.25,679.89 1158.34,692.54 1168.43,662.56 1178.52,691.50 1188.61,719.92 1198.70,635.53 1208.79,637.78 1218.88,651.82 1228.97,638.30 1239.06,682.66 1249.15,724.43 1259.24,714.73 1269.33,657.02 1279.42,633.45 1289.51,659.44 1299.60,631.19 1309.69,681.28 1319.78,684.05 1329.87,683.53 1339.96,609.53 1350.05,647.14 1360.14,638.47 1370.23,624.78 1380.32,647.83 1390.41,675.39 1400.50,659.44 1410.59,594.98 1420.68,659.44 1430.77,639.86 1440.86,658.06 1450.95,650.78 1461.04,657.36 1471.13,674.00 1481.22,666.03 1481.22,675.39 1471.13,686.30 1461.04,674.00 1450.95,662.39 1440.86,675.39 1430.77,661.70 1420.68,678.33 1410.59,612.48 1400.50,683.36 1390.41,688.56 1380.32,658.75 1370.23,645.06 1360.14,653.72 1350.05,658.75 1339.96,627.56 1329.87,694.45 1319.78,693.76 1309.69,692.89 1299.60,650.78 1289.51,673.31 1279.42,648.70 1269.33,672.96 1259.24,727.38 1249.15,739.33 1239.06,696.88 1228.97,653.38 1218.88,667.76 1208.79,659.10 1198.70,645.23 1188.61,727.38 1178.52,701.90 1168.43,679.89 1158.34,704.33 1148.25,692.54 1138.16,652.51 1128.07,653.20 1117.98,678.68 1107.89,700.69 1097.80,706.41 1087.71,671.23 1077.62,697.57 1067.53,680.07 1057.44,661.87 1047.35,686.82 1037.26,708.14 1027.17,655.63 1017.08,680.93 1006.99,692.72 996.90,667.59 986.81,777.81 976.72,696.36 966.63,702.94 956.54,708.49 946.45,660.14 936.36,691.85 926.27,618.89 916.18,661.70 906.09,620.45 896.00,699.47" fill="#f8d9a3"/>
<polygon points="896.00,675.73 906.09,577.64 916.18,618.54 926.27,588.56 936.36,655.11 946.45,616.64 956.54,679.89 966.63,670.71 976.72,661.18 986.81,775.21 996.90,634.66 1006.99,658.58 1017.08,641.07 1027.17,627.56 1037.26,681.97 1047.35,670.88 1057.44,624.96 1067.53,639.69 1077.62,660.83 1087.71,631.02 1097.80,678.51 1107.89,677.29 1117.98,648.35 1128.07,609.88 1138.16,621.14 1148.25,653.03 1158.34,675.73 1168.43,644.89 1178.52,668.97 1188.61,692.72 1198.70,602.25 1208.79,618.89 1218.88,623.22 1228.97,618.89 1239.06,664.81 1249.15,710.05 1259.24,694.62 1269.33,629.12 1279.42,612.31 1289.51,642.81 1299.60,615.25 1309.69,661.00 1319.78,655.11 1329.87,665.68 1339.96,596.53 1350.05,631.19 1360.14,619.58 1370.23,603.81 1380.32,630.50 1390.41,657.36 1400.50,642.11 1410.59,573.31 1420.68,631.89 1430.77,619.58 1440.86,637.78 1450.95,620.45 1461.04,637.78 1471.13,658.75 1481.22,649.39 1481.22,666.03 1471.13,674.00 1461.04,657.36 1450.95,650.78 1440.86,658.06 1430.77,639.86 1420.68,659.44 1410.59,594.98 1400.50,659.44 1390.41,675.39 1380.32,647.83 1370.23,624.78 1360.14,638.47 1350.05,647.14 1339.96,609.53 1329.87,683.53 1319.78,684.05 1309.69,681.28 1299.60,631.19 1289.51,659.44 1279.42,633.45 1269.33,657.02 1259.24,714.73 1249.15,724.43 1239.06,682.66 1228.97,638.30 1218.88,651.82 1208.79,637.78 1198.70,635.53 1188.61,719.92 1178.52,691.50 1168.43,662.56 1158.34,692.54 1148.25,679.89 1138.16,640.03 1128.07,637.26 1117.98,664.30 1107.89,693.24 1097.80,697.22 1087.71,655.98 1077.62,685.78 1067.53,667.76 1057.44,649.39 1047.35,681.62 1037.26,699.47 1027.17,645.93 1017.08,655.98 1006.99,676.95 996.90,653.72 986.81,776.94 976.72,681.11 966.63,690.29 956.54,697.92 946.45,637.61 936.36,675.91 926.27,610.57 916.18,646.10 906.09,604.16 896.00,691.85" fill="#9cc3ef"/>
<polyline points="896.00,804.67 906.09,792.71 916.18,785.43 926.27,794.79 936.36,796.35 946.45,797.74 956.54,805.01 966.63,794.79 976.72,798.43 986.81,804.15 996.90,794.10 1006.99,796.35 1017.08,798.43 1027.17,795.48 1037.26,800.34 1047.35,797.74 1057.44,796.00 1067.53,794.62 1077.62,795.48 1087.71,799.82 1097.80,793.40 1107.89,798.43 1117.98,798.43 1128.07,787.86 1138.16,793.40 1148.25,795.48 1158.34,798.43 1168.43,798.43 1178.52,797.74 1188.61,799.82 1198.70,798.43 1208.79,795.48 1218.88,801.38 1228.97,799.82 1239.06,795.48 1249.15,801.72 1259.24,799.82 1269.33,796.35 1279.42,796.35 1289.51,787.86 1299.60,797.74 1309.69,795.14 1319.78,797.74 1329.87,801.90 1339.96,792.71 1350.05,793.40 1360.14,794.10 1370.23,792.71 1380.32,799.12 1390.41,797.39 1400.50,800.68 1410.59,788.38 1420.68,788.38 1430.77,790.46 1440.86,796.52 1450.95,793.75 1461.04,799.82 1471.13,794.10 1481.22,793.40" fill="none" stroke="#c64fd0" stroke-width="1.0" stroke-linejoin="miter" stroke-miterlimit="12"/>
<polyline points="896.00,796.35 906.09,774.69 916.18,776.07 926.27,775.38 936.36,786.12 946.45,787.68 956.54,800.68 966.63,789.07 976.72,791.15 986.81,799.82 996.90,786.12 1006.99,783.35 1017.08,793.40 1027.17,786.82 1037.26,792.19 1047.35,784.74 1057.44,789.07 1067.53,787.68 1077.62,786.12 1087.71,792.71 1097.80,789.07 1107.89,793.40 1117.98,783.35 1128.07,774.34 1138.16,776.07 1148.25,784.05 1158.34,792.02 1168.43,791.15 1178.52,792.02 1188.61,793.75 1198.70,788.38 1208.79,790.46 1218.88,786.12 1228.97,778.67 1239.06,786.82 1249.15,793.75 1259.24,794.10 1269.33,785.43 1279.42,785.43 1289.51,779.02 1299.60,791.15 1309.69,791.67 1319.78,788.38 1329.87,795.83 1339.96,783.35 1350.05,781.62 1360.14,780.06 1370.23,784.39 1380.32,786.12 1390.41,786.82 1400.50,791.15 1410.59,776.42 1420.68,775.73 1430.77,779.71 1440.86,780.41 1450.95,784.39 1461.04,782.14 1471.13,781.10 1481.22,782.49" fill="none" stroke="#8c5a3c" stroke-width="1.0" stroke-linejoin="miter" stroke-miterlimit="12"/>
<polyline points="896.00,792.71 906.09,750.77 916.18,765.85 926.27,758.92 936.36,775.38 946.45,775.73 956.54,785.43 966.63,784.39 976.72,785.43 986.81,797.04 996.90,770.18 1006.99,776.77 1017.08,784.74 1027.17,768.10 1037.26,786.82 1047.35,784.05 1057.44,784.39 1067.53,775.38 1077.62,773.82 1087.71,783.35 1097.80,784.39 1107.89,792.02 1117.98,766.72 1128.07,758.74 1138.16,761.52 1148.25,777.46 1158.34,789.76 1168.43,783.35 1178.52,789.07 1188.61,784.74 1198.70,775.38 1208.79,784.05 1218.88,774.51 1228.97,762.38 1239.06,779.71 1249.15,790.46 1259.24,789.07 1269.33,778.15 1279.42,776.07 1289.51,765.85 1299.60,782.49 1309.69,788.03 1319.78,778.15 1329.87,791.15 1339.96,750.77 1350.05,778.15 1360.14,765.16 1370.23,758.74 1380.32,772.43 1390.41,779.71 1400.50,771.74 1410.59,768.10 1420.68,757.18 1430.77,768.10 1440.86,773.13 1450.95,769.49 1461.04,777.46 1471.13,779.71 1481.22,768.10" fill="none" stroke="#e5403e" stroke-width="1.0" stroke-linejoin="miter" stroke-miterlimit="12"/>
<polyline points="896.00,782.49 906.09,731.54 916.18,750.08 926.27,736.21 936.36,761.52 946.45,762.38 956.54,768.10 966.63,771.39 976.72,771.74 986.81,788.38 996.90,751.46 1006.99,759.44 1017.08,772.43 1027.17,750.08 1037.26,772.43 1047.35,772.43 1057.44,761.52 1067.53,758.05 1077.62,755.80 1087.71,767.41 1097.80,768.79 1107.89,784.74 1117.98,751.46 1128.07,745.05 1138.16,744.19 1148.25,759.44 1158.34,769.49 1168.43,768.79 1178.52,771.74 1188.61,772.43 1198.70,764.12 1208.79,765.85 1218.88,752.85 1228.97,746.44 1239.06,764.46 1249.15,784.39 1259.24,779.71 1269.33,758.05 1279.42,759.44 1289.51,747.13 1299.60,761.52 1309.69,771.39 1319.78,766.72 1329.87,771.91 1339.96,729.80 1350.05,755.45 1360.14,754.41 1370.23,740.55 1380.32,759.78 1390.41,761.34 1400.50,762.38 1410.59,748.52 1420.68,740.55 1430.77,752.85 1440.86,754.41 1450.95,752.68 1461.04,772.43 1471.13,748.52 1481.22,753.72" fill="none" stroke="#4c5ae6" stroke-width="1.0" stroke-linejoin="miter" stroke-miterlimit="12"/>
<polyline points="896.00,772.43 906.09,715.42 916.18,739.85 926.27,719.75 936.36,745.75 946.45,744.01 956.54,760.13 966.63,762.38 976.72,759.44 986.81,781.79 996.90,742.45 1006.99,750.77 1017.08,755.80 1027.17,737.77 1037.26,758.05 1047.35,760.13 1057.44,750.77 1067.53,748.52 1077.62,742.80 1087.71,754.41 1097.80,760.13 1107.89,775.38 1117.98,739.16 1128.07,728.42 1138.16,734.83 1148.25,745.75 1158.34,756.49 1168.43,762.38 1178.52,763.08 1188.61,764.12 1198.70,750.08 1208.79,752.16 1218.88,734.83 1228.97,732.40 1239.06,750.08 1249.15,780.41 1259.24,779.02 1269.33,745.05 1279.42,747.83 1289.51,739.85 1299.60,748.52 1309.69,761.52 1319.78,750.77 1329.87,764.81 1339.96,715.42 1350.05,739.85 1360.14,744.19 1370.23,726.86 1380.32,742.80 1390.41,754.41 1400.50,752.16 1410.59,731.19 1420.68,733.44 1430.77,737.77 1440.86,742.11 1450.95,739.85 1461.04,760.13 1471.13,738.47 1481.22,742.11" fill="none" stroke="#3b983c" stroke-width="1.0" stroke-linejoin="miter" stroke-miterlimit="12"/>
<polyline points="896.00,754.41 906.09,689.25 916.18,720.44 926.27,674.35 936.36,727.55 946.45,716.11 956.54,750.08 966.63,745.75 976.72,744.01 986.81,780.41 996.90,714.55 1006.99,735.00 1017.08,728.07 1027.17,720.44 1037.26,743.49 1047.35,737.77 1057.44,736.21 1067.53,737.08 1077.62,731.88 1087.71,735.52 1097.80,749.39 1107.89,762.38 1117.98,722.87 1128.07,705.19 1138.16,714.55 1148.25,730.84 1158.34,739.16 1168.43,744.53 1178.52,739.16 1188.61,755.97 1198.70,715.77 1208.79,704.67 1218.88,717.15 1228.97,715.42 1239.06,737.95 1249.15,771.74 1259.24,755.97 1269.33,722.00 1279.42,729.80 1289.51,734.13 1299.60,732.75 1309.69,748.35 1319.78,738.47 1329.87,756.49 1339.96,699.47 1350.05,719.75 1360.14,726.86 1370.23,697.22 1380.32,717.50 1390.41,737.77 1400.50,739.68 1410.59,705.19 1420.68,718.19 1430.77,715.42 1440.86,720.44 1450.95,712.47 1461.04,750.08 1471.13,729.80 1481.22,722.52" fill="none" stroke="#f08624" stroke-width="1.0" stroke-linejoin="miter" stroke-miterlimit="12"/>
<polyline points="896.00,724.08 906.09,635.70 916.18,686.82 926.27,634.49 936.36,699.47 946.45,683.01 956.54,718.19 966.63,715.77 976.72,714.03 986.81,778.67 996.90,678.16 1006.99,703.29 1017.08,691.85 1027.17,679.20 1037.26,720.44 1047.35,705.89 1057.44,693.41 1067.53,692.72 1077.62,708.66 1087.71,694.45 1097.80,711.61 1107.89,722.87 1117.98,697.22 1128.07,667.24 1138.16,658.75 1148.25,703.98 1158.34,711.26 1168.43,707.45 1178.52,708.14 1188.61,732.06 1198.70,679.03 1208.79,668.63 1218.88,672.09 1228.97,677.81 1239.06,713.69 1249.15,748.35 1259.24,736.04 1269.33,685.44 1279.42,689.60 1289.51,692.89 1299.60,687.17 1309.69,707.45 1319.78,707.45 1329.87,721.83 1339.96,662.39 1350.05,689.08 1360.14,689.08 1370.23,653.72 1380.32,683.36 1390.41,696.53 1400.50,695.14 1410.59,666.72 1420.68,686.82 1430.77,674.00 1440.86,685.61 1450.95,684.74 1461.04,697.92 1471.13,693.58 1481.22,687.69" fill="none" stroke="#1eadab" stroke-width="1.0" stroke-linejoin="miter" stroke-miterlimit="12"/>
<polyline points="896.00,699.47 906.09,620.45 916.18,661.70 926.27,618.89 936.36,691.85 946.45,660.14 956.54,708.49 966.63,702.94 976.72,696.36 986.81,777.81 996.90,667.59 1006.99,692.72 1017.08,680.93 1027.17,655.63 1037.26,708.14 1047.35,686.82 1057.44,661.87 1067.53,680.07 1077.62,697.57 1087.71,671.23 1097.80,706.41 1107.89,700.69 1117.98,678.68 1128.07,653.20 1138.16,652.51 1148.25,692.54 1158.34,704.33 1168.43,679.89 1178.52,701.90 1188.61,727.38 1198.70,645.23 1208.79,659.10 1218.88,667.76 1228.97,653.38 1239.06,696.88 1249.15,739.33 1259.24,727.38 1269.33,672.96 1279.42,648.70 1289.51,673.31 1299.60,650.78 1309.69,692.89 1319.78,693.76 1329.87,694.45 1339.96,627.56 1350.05,658.75 1360.14,653.72 1370.23,645.06 1380.32,658.75 1390.41,688.56 1400.50,683.36 1410.59,612.48 1420.68,678.33 1430.77,661.70 1440.86,675.39 1450.95,662.39 1461.04,674.00 1471.13,686.30 1481.22,675.39" fill="none" stroke="#ef5383" stroke-width="1.0" stroke-linejoin="miter" stroke-miterlimit="12"/>
<polyline points="896.00,691.85 906.09,604.16 916.18,646.10 926.27,610.57 936.36,675.91 946.45,637.61 956.54,697.92 966.63,690.29 976.72,681.11 986.81,776.94 996.90,653.72 1006.99,676.95 1017.08,655.98 1027.17,645.93 1037.26,699.47 1047.35,681.62 1057.44,649.39 1067.53,667.76 1077.62,685.78 1087.71,655.98 1097.80,697.22 1107.89,693.24 1117.98,664.30 1128.07,637.26 1138.16,640.03 1148.25,679.89 1158.34,692.54 1168.43,662.56 1178.52,691.50 1188.61,719.92 1198.70,635.53 1208.79,637.78 1218.88,651.82 1228.97,638.30 1239.06,682.66 1249.15,724.43 1259.24,714.73 1269.33,657.02 1279.42,633.45 1289.51,659.44 1299.60,631.19 1309.69,681.28 1319.78,684.05 1329.87,683.53 1339.96,609.53 1350.05,647.14 1360.14,638.47 1370.23,624.78 1380.32,647.83 1390.41,675.39 1400.50,659.44 1410.59,594.98 1420.68,659.44 1430.77,639.86 1440.86,658.06 1450.95,650.78 1461.04,657.36 1471.13,674.00 1481.22,666.03" fill="none" stroke="#efae3a" stroke-width="1.0" stroke-linejoin="miter" stroke-miterlimit="12"/>
<polyline points="896.00,675.73 906.09,577.64 916.18,618.54 926.27,588.56 936.36,655.11 946.45,616.64 956.54,679.89 966.63,670.71 976.72,661.18 986.81,775.21 996.90,634.66 1006.99,658.58 1017.08,641.07 1027.17,627.56 1037.26,681.97 1047.35,670.88 1057.44,624.96 1067.53,639.69 1077.62,660.83 1087.71,631.02 1097.80,678.51 1107.89,677.29 1117.98,648.35 1128.07,609.88 1138.16,621.14 1148.25,653.03 1158.34,675.73 1168.43,644.89 1178.52,668.97 1188.61,692.72 1198.70,602.25 1208.79,618.89 1218.88,623.22 1228.97,618.89 1239.06,664.81 1249.15,710.05 1259.24,694.62 1269.33,629.12 1279.42,612.31 1289.51,642.81 1299.60,615.25 1309.69,661.00 1319.78,655.11 1329.87,665.68 1339.96,596.53 1350.05,631.19 1360.14,619.58 1370.23,603.81 1380.32,630.50 1390.41,657.36 1400.50,642.11 1410.59,573.31 1420.68,631.89 1430.77,619.58 1440.86,637.78 1450.95,620.45 1461.04,637.78 1471.13,658.75 1481.22,649.39" fill="none" stroke="#2a80e2" stroke-width="1.0" stroke-linejoin="miter" stroke-miterlimit="12"/><line x1="906.09" y1="569" x2="906.09" y2="811.6" stroke="rgba(90,110,140,0.07)" stroke-width="0.8"/><line x1="926.27" y1="569" x2="926.27" y2="811.6" stroke="rgba(90,110,140,0.07)" stroke-width="0.8"/><line x1="946.45" y1="569" x2="946.45" y2="811.6" stroke="rgba(90,110,140,0.07)" stroke-width="0.8"/><line x1="966.63" y1="569" x2="966.63" y2="811.6" stroke="rgba(90,110,140,0.07)" stroke-width="0.8"/><line x1="986.81" y1="569" x2="986.81" y2="811.6" stroke="rgba(90,110,140,0.07)" stroke-width="0.8"/><line x1="1006.99" y1="569" x2="1006.99" y2="811.6" stroke="rgba(90,110,140,0.07)" stroke-width="0.8"/><line x1="1027.17" y1="569" x2="1027.17" y2="811.6" stroke="rgba(90,110,140,0.07)" stroke-width="0.8"/><line x1="1047.35" y1="569" x2="1047.35" y2="811.6" stroke="rgba(90,110,140,0.07)" stroke-width="0.8"/><line x1="1067.53" y1="569" x2="1067.53" y2="811.6" stroke="rgba(90,110,140,0.07)" stroke-width="0.8"/><line x1="1087.71" y1="569" x2="1087.71" y2="811.6" stroke="rgba(90,110,140,0.07)" stroke-width="0.8"/><line x1="1107.89" y1="569" x2="1107.89" y2="811.6" stroke="rgba(90,110,140,0.07)" stroke-width="0.8"/><line x1="1128.07" y1="569" x2="1128.07" y2="811.6" stroke="rgba(90,110,140,0.07)" stroke-width="0.8"/><line x1="1148.25" y1="569" x2="1148.25" y2="811.6" stroke="rgba(90,110,140,0.07)" stroke-width="0.8"/><line x1="1168.43" y1="569" x2="1168.43" y2="811.6" stroke="rgba(90,110,140,0.07)" stroke-width="0.8"/><line x1="1188.61" y1="569" x2="1188.61" y2="811.6" stroke="rgba(90,110,140,0.07)" stroke-width="0.8"/><line x1="1208.79" y1="569" x2="1208.79" y2="811.6" stroke="rgba(90,110,140,0.07)" stroke-width="0.8"/><line x1="1228.97" y1="569" x2="1228.97" y2="811.6" stroke="rgba(90,110,140,0.07)" stroke-width="0.8"/><line x1="1249.15" y1="569" x2="1249.15" y2="811.6" stroke="rgba(90,110,140,0.07)" stroke-width="0.8"/><line x1="1269.33" y1="569" x2="1269.33" y2="811.6" stroke="rgba(90,110,140,0.07)" stroke-width="0.8"/><line x1="1289.51" y1="569" x2="1289.51" y2="811.6" stroke="rgba(90,110,140,0.07)" stroke-width="0.8"/><line x1="1309.69" y1="569" x2="1309.69" y2="811.6" stroke="rgba(90,110,140,0.07)" stroke-width="0.8"/><line x1="1329.87" y1="569" x2="1329.87" y2="811.6" stroke="rgba(90,110,140,0.07)" stroke-width="0.8"/><line x1="1350.05" y1="569" x2="1350.05" y2="811.6" stroke="rgba(90,110,140,0.07)" stroke-width="0.8"/><line x1="1370.23" y1="569" x2="1370.23" y2="811.6" stroke="rgba(90,110,140,0.07)" stroke-width="0.8"/><line x1="1390.41" y1="569" x2="1390.41" y2="811.6" stroke="rgba(90,110,140,0.07)" stroke-width="0.8"/><line x1="1410.59" y1="569" x2="1410.59" y2="811.6" stroke="rgba(90,110,140,0.07)" stroke-width="0.8"/><line x1="1430.77" y1="569" x2="1430.77" y2="811.6" stroke="rgba(90,110,140,0.07)" stroke-width="0.8"/><line x1="1450.95" y1="569" x2="1450.95" y2="811.6" stroke="rgba(90,110,140,0.07)" stroke-width="0.8"/><line x1="1471.13" y1="569" x2="1471.13" y2="811.6" stroke="rgba(90,110,140,0.07)" stroke-width="0.8"/><line x1="896" y1="794.27" x2="1481.2" y2="794.27" stroke="rgba(90,110,140,0.05)" stroke-width="0.8"/><line x1="896" y1="776.94" x2="1481.2" y2="776.94" stroke="rgba(90,110,140,0.05)" stroke-width="0.8"/><line x1="896" y1="759.61" x2="1481.2" y2="759.61" stroke="rgba(90,110,140,0.05)" stroke-width="0.8"/><line x1="896" y1="742.28" x2="1481.2" y2="742.28" stroke="rgba(90,110,140,0.05)" stroke-width="0.8"/><line x1="896" y1="724.95" x2="1481.2" y2="724.95" stroke="rgba(90,110,140,0.05)" stroke-width="0.8"/><line x1="896" y1="707.62" x2="1481.2" y2="707.62" stroke="rgba(90,110,140,0.05)" stroke-width="0.8"/><line x1="896" y1="690.29" x2="1481.2" y2="690.29" stroke="rgba(90,110,140,0.05)" stroke-width="0.8"/><line x1="896" y1="672.96" x2="1481.2" y2="672.96" stroke="rgba(90,110,140,0.05)" stroke-width="0.8"/><line x1="896" y1="655.63" x2="1481.2" y2="655.63" stroke="rgba(90,110,140,0.05)" stroke-width="0.8"/><line x1="896" y1="638.30" x2="1481.2" y2="638.30" stroke="rgba(90,110,140,0.05)" stroke-width="0.8"/><line x1="896" y1="620.97" x2="1481.2" y2="620.97" stroke="rgba(90,110,140,0.05)" stroke-width="0.8"/><line x1="896" y1="603.64" x2="1481.2" y2="603.64" stroke="rgba(90,110,140,0.05)" stroke-width="0.8"/><line x1="896" y1="586.31" x2="1481.2" y2="586.31" stroke="rgba(90,110,140,0.05)" stroke-width="0.8"/><line x1="896" y1="568.98" x2="1481.2" y2="568.98" stroke="rgba(90,110,140,0.05)" stroke-width="0.8"/></svg>
<div class="t" style="right:711.00px;text-align:right;top:808.50px;font-size:6.5px;color:#3f4753;font-weight:400;">$0.00</div>
<div class="t" style="right:711.00px;text-align:right;top:791.17px;font-size:6.5px;color:#3f4753;font-weight:400;">$1,000.00</div>
<div class="t" style="right:711.00px;text-align:right;top:773.84px;font-size:6.5px;color:#3f4753;font-weight:400;">$2,000.00</div>
<div class="t" style="right:711.00px;text-align:right;top:756.51px;font-size:6.5px;color:#3f4753;font-weight:400;">$3,000.00</div>
<div class="t" style="right:711.00px;text-align:right;top:739.18px;font-size:6.5px;color:#3f4753;font-weight:400;">$4,000.00</div>
<div class="t" style="right:711.00px;text-align:right;top:721.85px;font-size:6.5px;color:#3f4753;font-weight:400;">$5,000.00</div>
<div class="t" style="right:711.00px;text-align:right;top:704.52px;font-size:6.5px;color:#3f4753;font-weight:400;">$6,000.00</div>
<div class="t" style="right:711.00px;text-align:right;top:687.19px;font-size:6.5px;color:#3f4753;font-weight:400;">$7,000.00</div>
<div class="t" style="right:711.00px;text-align:right;top:669.86px;font-size:6.5px;color:#3f4753;font-weight:400;">$8,000.00</div>
<div class="t" style="right:711.00px;text-align:right;top:652.53px;font-size:6.5px;color:#3f4753;font-weight:400;">$9,000.00</div>
<div class="t" style="right:711.00px;text-align:right;top:635.20px;font-size:6.5px;color:#3f4753;font-weight:400;">$10,000.00</div>
<div class="t" style="right:711.00px;text-align:right;top:617.87px;font-size:6.5px;color:#3f4753;font-weight:400;">$11,000.00</div>
<div class="t" style="right:711.00px;text-align:right;top:600.54px;font-size:6.5px;color:#3f4753;font-weight:400;">$12,000.00</div>
<div class="t" style="right:711.00px;text-align:right;top:583.21px;font-size:6.5px;color:#3f4753;font-weight:400;">$13,000.00</div>
<div class="t" style="right:711.00px;text-align:right;top:565.88px;font-size:6.5px;color:#3f4753;font-weight:400;">$14,000.00</div>
<div class="t" style="left:706.09px;width:400px;text-align:center;top:818.67px;font-size:7px;color:#3f4753;font-weight:400;">2024-02-21</div>
<div class="t" style="left:746.45px;width:400px;text-align:center;top:818.67px;font-size:7px;color:#3f4753;font-weight:400;">2024-02-25</div>
<div class="t" style="left:786.81px;width:400px;text-align:center;top:818.67px;font-size:7px;color:#3f4753;font-weight:400;">2024-02-29</div>
<div class="t" style="left:827.17px;width:400px;text-align:center;top:818.67px;font-size:7px;color:#3f4753;font-weight:400;">2024-03-04</div>
<div class="t" style="left:867.53px;width:400px;text-align:center;top:818.67px;font-size:7px;color:#3f4753;font-weight:400;">2024-03-08</div>
<div class="t" style="left:907.89px;width:400px;text-align:center;top:818.67px;font-size:7px;color:#3f4753;font-weight:400;">2024-03-12</div>
<div class="t" style="left:948.25px;width:400px;text-align:center;top:818.67px;font-size:7px;color:#3f4753;font-weight:400;">2024-03-16</div>
<div class="t" style="left:988.61px;width:400px;text-align:center;top:818.67px;font-size:7px;color:#3f4753;font-weight:400;">2024-03-20</div>
<div class="t" style="left:1028.97px;width:400px;text-align:center;top:818.67px;font-size:7px;color:#3f4753;font-weight:400;">2024-03-24</div>
<div class="t" style="left:1069.33px;width:400px;text-align:center;top:818.67px;font-size:7px;color:#3f4753;font-weight:400;">2024-03-28</div>
<div class="t" style="left:1109.69px;width:400px;text-align:center;top:818.67px;font-size:7px;color:#3f4753;font-weight:400;">2024-04-01</div>
<div class="t" style="left:1150.05px;width:400px;text-align:center;top:818.67px;font-size:7px;color:#3f4753;font-weight:400;">2024-04-05</div>
<div class="t" style="left:1190.41px;width:400px;text-align:center;top:818.67px;font-size:7px;color:#3f4753;font-weight:400;">2024-04-09</div>
<div class="t" style="left:1230.77px;width:400px;text-align:center;top:818.67px;font-size:7px;color:#3f4753;font-weight:400;">2024-04-13</div>
<div class="t" style="left:1271.13px;width:400px;text-align:center;top:818.67px;font-size:7px;color:#3f4753;font-weight:400;">2024-04-17</div>
<div class="t" style="left:988.90px;width:400px;text-align:center;top:833.87px;font-size:7px;color:#5f6a7b;font-weight:400;">Created At Date</div>
<svg style="left:0;top:0" width="1600" height="900" viewBox="0 0 1600 900"><g fill="none" stroke="#ea6b9a" stroke-width="8" stroke-linecap="round" stroke-linejoin="round">
<path d="M1129.5,262 C1150,250 1168,244 1185,248 C1200,252 1211,265 1209,283 C1207,300 1195,307 1187,306 C1177,304 1174,292 1180,284 C1188,273 1205,270 1218,270 C1243,272 1268,297 1269,337 C1270,377 1250,408 1226,435"/>
<path d="M1226,387 L1226,435 L1264,420.5"/>
</g></svg>
</body></html>
